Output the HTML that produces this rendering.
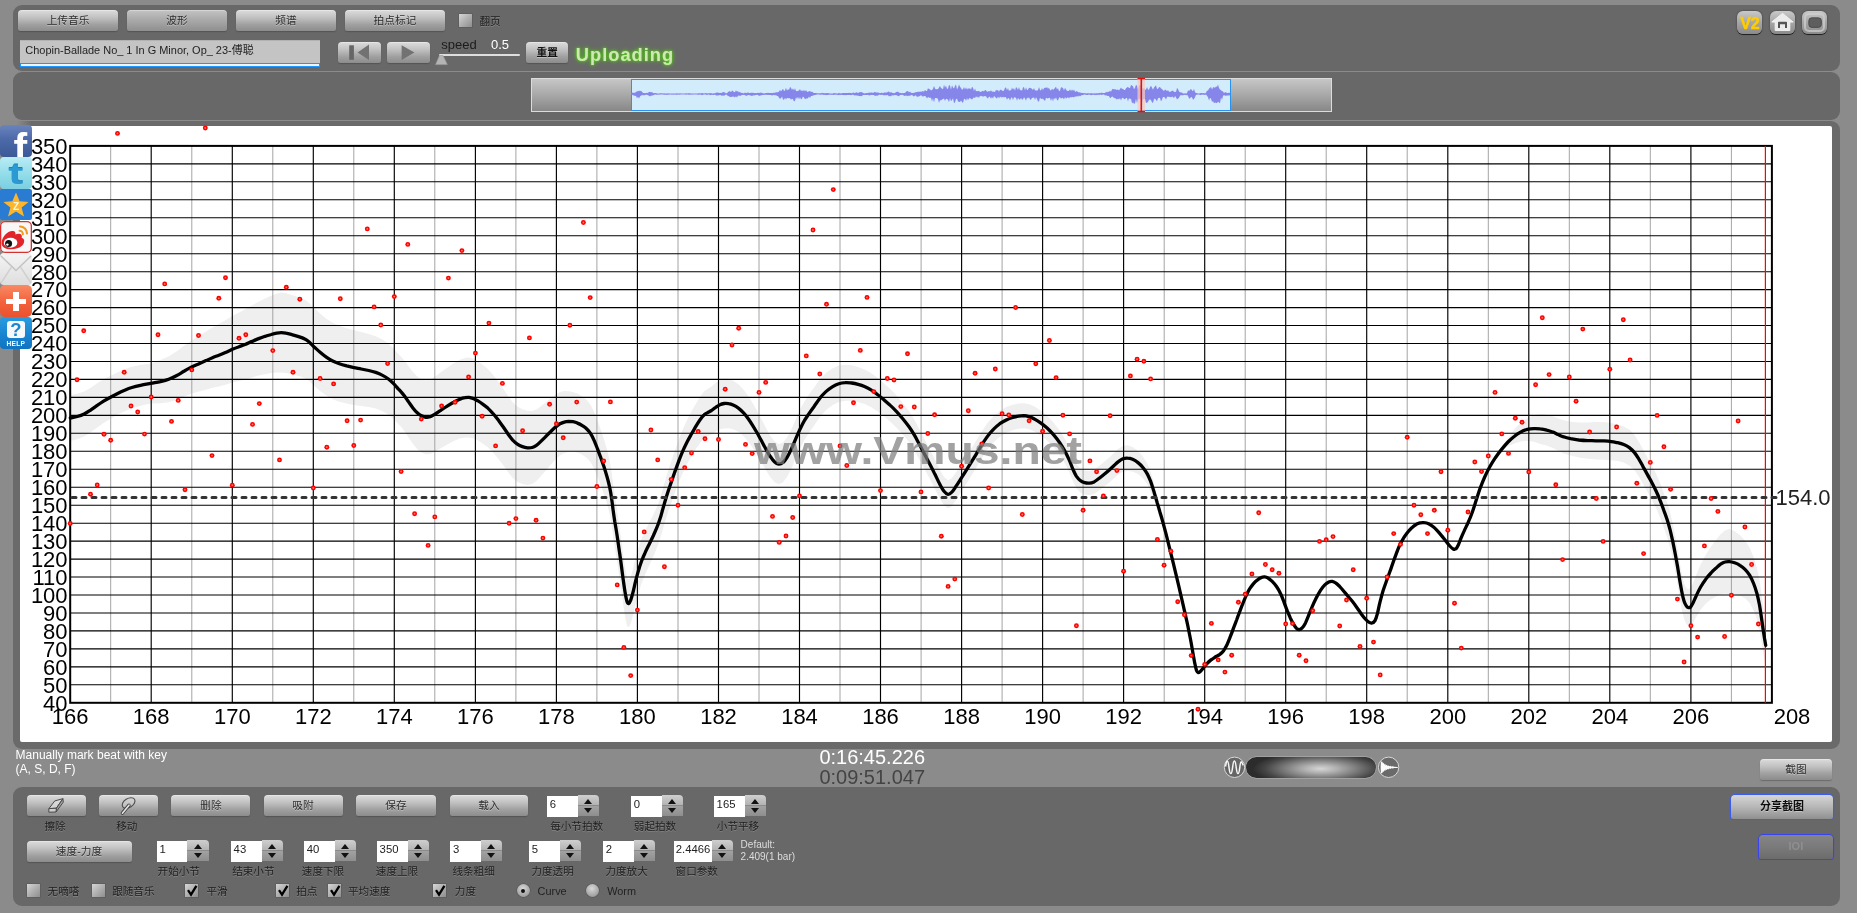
<!DOCTYPE html>
<html lang="zh"><head><meta charset="utf-8"><title>Vmus.net</title>
<style>
html,body{margin:0;padding:0}
body{width:1857px;height:913px;overflow:hidden;background:#8b8b8b;position:relative;font-family:"Liberation Sans","Noto Sans CJK SC",sans-serif;font-size:11px;color:#2a2a2a}
.abs{position:absolute}
.panel{position:absolute;background:#686868;border-radius:9px}
.btn{position:absolute;height:21px;line-height:21px;border-radius:4px 4px 2.5px 2.5px;text-align:center;font-size:10.7px;color:#2e2e2e;
 background:linear-gradient(#dcdcdc 0%,#c2c2c2 35%,#a0a0a0 70%,#8c8c8c 100%);box-shadow:0 1px 1px rgba(50,50,50,.35),inset 0 1px 0 rgba(255,255,255,.3);text-shadow:0 1px 0 rgba(255,255,255,.35)}
.btn.dk{background:linear-gradient(#c4c4c4 0%,#adadad 40%,#8f8f8f 100%)}
.lbl{position:absolute;font-size:10.6px;color:#1e1e1e;white-space:nowrap;line-height:12px;text-shadow:0 1px 0 rgba(255,255,255,.18)}
.cb{position:absolute;width:13px;height:13px;background:linear-gradient(135deg,#d6d6d6,#b0b0b0 50%,#8e8e8e);box-shadow:0 0 0 0.5px rgba(70,70,70,.6)}
.cb svg{position:absolute;left:1px;top:0}
.sp{position:absolute;height:21px}
.sp .in{position:absolute;left:0;top:0.5px;height:21px;background:#fff;font-size:11.3px;line-height:14px;color:#222;padding:1.2px 0 0 2.6px;box-sizing:border-box}
.sp .ar{position:absolute;top:-0.5px;width:21.5px;height:21px;border-radius:0 4px 0 0;background:linear-gradient(#cfcfcf,#b2b2b2 49%,#8a8a8a 50%,#a2a2a2 52%,#8e8e8e)}
.sp .ar:before,.sp .ar:after{content:"";position:absolute;left:6.5px;border:4px solid transparent}
.sp .ar:before{top:0.5px;border-bottom:5px solid #111;border-top-width:0;top:4px}
.sp .ar:after{top:13px;border-top:5px solid #111;border-bottom-width:0}
.soc{position:absolute;left:0;width:31.6px;height:31.4px;border-radius:4px;overflow:hidden}
.ti{position:absolute;top:11px;width:25px;height:23px;border-radius:6px;background:linear-gradient(#c9c9c9,#a6a6a6 50%,#8a8a8a);box-shadow:0 1px 0 #222,0 0 2px rgba(30,30,30,.6)}
#wrap{position:absolute;left:0;top:0;width:1857px;height:913px;will-change:transform}
</style></head><body><div id="wrap">

<!-- top control panel -->
<div class="panel" style="left:13px;top:5px;width:1827px;height:65.6px"></div>
<div class="btn" style="left:18.3px;top:10px;width:99.5px">上传音乐</div>
<div class="btn dk" style="left:127.3px;top:10px;width:99.5px">波形</div>
<div class="btn" style="left:236.3px;top:10px;width:99.5px">频谱</div>
<div class="btn" style="left:345px;top:10px;width:100px">拍点标记</div>
<div class="cb" style="left:458.5px;top:14px"></div>
<div class="lbl" style="left:479.5px;top:15px">翻页</div>

<div class="abs" style="left:20px;top:40px;width:299.6px;height:23.2px;background:#c4c4c4;box-shadow:inset 0 1px 0 #b2b2b2"></div>
<div class="abs" style="left:25.3px;top:43.5px;font-size:10.96px;line-height:13px;color:#1e1e1e;white-space:nowrap">Chopin-Ballade No_ 1 In G Minor, Op_ 23-傅聪</div>
<div class="abs" style="left:20px;top:63.2px;width:297.6px;height:1.4px;border:1.1px solid #1e96ff;background:#eaf5ff"></div>

<div class="btn" style="left:338px;top:41.8px;width:42.8px"><svg width="43" height="21" viewBox="0 0 43 21" style="position:absolute;left:0;top:0"><rect x="11.2" y="3.3" width="4.7" height="14.5" fill="#666"/><path d="M31 2.6L19.6 10.4L31 18.1Z" fill="#727272"/></svg></div>
<div class="btn" style="left:387.4px;top:41.8px;width:42.4px"><svg width="43" height="21" viewBox="0 0 43 21" style="position:absolute;left:0;top:0"><path d="M14.6 3.3L27.4 10.6L14.6 18.1Z" fill="#727272"/></svg></div>
<div class="abs" style="left:441.3px;top:37px;font-size:13px;line-height:15px;color:#1c1c1c">speed</div>
<div class="abs" style="left:491px;top:37px;font-size:13px;line-height:15px;color:#fff">0.5</div>
<div class="abs" style="left:438.6px;top:53.6px;width:81px;height:2.6px;background:#dedede;border-radius:1px"></div>
<svg class="abs" style="left:434px;top:54px" width="16" height="12" viewBox="0 0 16 12"><path d="M5.5 1.5L9 1.5L13.3 10.6L1.6 10.6Z" fill="#b4b4b4" stroke="#9c9c9c" stroke-width="0.6"/></svg>
<div class="btn" style="left:526px;top:41.8px;width:42.4px;font-weight:bold;color:#111">重置</div>
<div class="abs" style="left:575.8px;top:44px;font-size:18.3px;letter-spacing:1px;line-height:22px;font-weight:bold;color:#cfe9b4;text-shadow:0 0 3px #58c020,0 0 5px #58c020,0 0 2px #5ab828">Uploading</div>

<div class="ti" style="left:1737.3px"><div class="abs" style="left:0;top:1.6px;width:25px;text-align:center;font:bold 16px/21px 'Liberation Sans',sans-serif;color:#ffcc00;-webkit-text-stroke:0.5px #ffcc00;letter-spacing:-0.3px">V2</div></div>
<div class="ti" style="left:1769.8px"><svg width="25" height="23" viewBox="0 0 25 23" style="position:absolute;left:0;top:0"><path d="M12.5 2.4L23.2 11L19.8 11L19.8 19.4L5.2 19.4L5.2 11L1.8 11Z" fill="#ececec" stroke="#f4f4f4" stroke-width="1" stroke-linejoin="round"/><path d="M8 17V11.5Q8 10.8 8.8 10.8H16.2Q17 10.8 17 11.5V17H15V13.2H10V17Z" fill="#555"/></svg></div>
<div class="ti" style="left:1801.8px"><svg width="25" height="23" viewBox="0 0 25 23" style="position:absolute;left:0;top:0"><rect x="3" y="3" width="19" height="17" rx="4" fill="none" stroke="#d0d0d0" stroke-width="2" stroke-opacity=".7"/><rect x="6.8" y="6.8" width="12.6" height="9.6" rx="3" fill="#5e5e5e" stroke="#444" stroke-width="0.8"/></svg></div>

<!-- waveform panel -->
<div class="panel" style="left:13px;top:72.2px;width:1827px;height:47.8px"></div>
<div class="abs" style="left:531.3px;top:78.3px;width:800.5px;height:34px;box-sizing:border-box;border:1px solid #dcdcdc;background:linear-gradient(#c6c6c6,#a8a8a8 50%,#878787)"></div>
<div class="abs" style="left:630.8px;top:79.3px;width:600px;height:31.6px;box-sizing:border-box;border:1.2px solid #2a93f0;background:#d3ecfc"></div>
<svg class="abs" style="left:0;top:0" width="1857" height="125" viewBox="0 0 1857 125">
<polygon points="631,93.3 632,92.8 633,92.6 634,92.9 635,92.5 636,92.2 637,91.1 638,91.4 639,90.5 640,91.2 641,90.8 642,91.8 643,93 644,93 645,93.2 646,93.1 647,92.8 648,92.9 649,91.8 650,92.1 651,92.2 652,92 653,93.1 654,93.2 655,93.1 656,92.9 657,93.4 658,93.5 659,93.6 660,93.3 661,93.2 662,93.3 663,93.4 664,93.2 665,93.5 666,93.6 667,93.4 668,93.2 669,93.5 670,93.6 671,93.6 672,93.6 673,93.6 674,93.5 675,93.6 676,93.4 677,93.3 678,93.5 679,93.5 680,93.2 681,93.6 682,93.6 683,93.4 684,93.6 685,93.5 686,93.2 687,93.4 688,93.3 689,93.2 690,93.2 691,93.5 692,93.6 693,93.6 694,93.5 695,93.4 696,93.5 697,93.5 698,93.5 699,93.1 700,93.4 701,93.3 702,92.9 703,93.2 704,93.4 705,93.3 706,92.9 707,93.4 708,93.2 709,93.2 710,93.2 711,92.9 712,93.4 713,93.4 714,93.2 715,93.3 716,92.8 717,92.6 718,92.5 719,93 720,92.8 721,93 722,92.7 723,91.9 724,92.2 725,92.5 726,93.4 727,93.1 728,92.2 729,91.3 730,91.2 731,92.3 732,90.5 733,91 734,92.2 735,91.9 736,90.3 737,91.8 738,91.1 739,92.5 740,91.7 741,93.1 742,92.8 743,93.2 744,93.3 745,92.4 746,92.9 747,92.9 748,92.3 749,92.9 750,92.9 751,92.8 752,92.8 753,92.8 754,92.9 755,93.3 756,93 757,92.9 758,92.8 759,93 760,92.8 761,92.4 762,93.1 763,93.2 764,93.4 765,93.3 766,92.9 767,93.1 768,92.7 769,93 770,93.1 771,93.1 772,93.1 773,92.9 774,92.6 775,93 776,91.9 777,92.5 778,92.1 779,91.7 780,89.7 781,91.5 782,89.9 783,88.8 784,91.1 785,90.5 786,87.8 787,90.7 788,89.1 789,90 790,87.1 791,87.7 792,90.1 793,88.2 794,90.6 795,88.3 796,91.1 797,91.3 798,90.8 799,90.4 800,88.9 801,91.2 802,90 803,91.4 804,89.7 805,91.5 806,90.1 807,91.7 808,91.8 809,91.2 810,91.1 811,91.9 812,91.5 813,92.6 814,92.9 815,93 816,93 817,93.2 818,93.3 819,93.4 820,93 821,93.4 822,92.8 823,92.9 824,93.2 825,93.3 826,93.1 827,93.3 828,93 829,93.3 830,93.4 831,93.4 832,93.4 833,93.4 834,92.9 835,93.3 836,93.3 837,93.4 838,93.4 839,92.8 840,93.4 841,93.2 842,93.3 843,92.9 844,93 845,93.1 846,92.9 847,92.9 848,92.9 849,92.8 850,93 851,92.9 852,93.2 853,92.5 854,92.7 855,93.2 856,92.3 857,92.4 858,93 859,92.6 860,92.1 861,92.3 862,92.1 863,93 864,93.2 865,93.4 866,93.1 867,92.9 868,93 869,92.6 870,92.8 871,92.6 872,92.4 873,93 874,92.2 875,92.1 876,92.4 877,92.6 878,92.4 879,92.7 880,93.3 881,92.7 882,92.8 883,93.2 884,92.5 885,92.4 886,92.5 887,92.5 888,91.7 889,91.4 890,92.8 891,91.9 892,92.7 893,93.1 894,93.3 895,93.1 896,92 897,91.9 898,91.5 899,92.8 900,92.7 901,93.2 902,93.1 903,93.2 904,92.9 905,93 906,91.7 907,91.2 908,91 909,92.4 910,91.4 911,92.8 912,93 913,93 914,92.7 915,92.5 916,91.9 917,92.3 918,91.4 919,92.1 920,91.6 921,91.7 922,91.4 923,91 924,91.8 925,89.7 926,90.9 927,91.1 928,88.1 929,89.2 930,89.2 931,90.4 932,90 933,88.7 934,86.1 935,88.6 936,89.6 937,88.9 938,89.2 939,87.4 940,86 941,88.1 942,88.4 943,89.6 944,84.5 945,87.8 946,85.4 947,89 948,88.5 949,84.9 950,85.6 951,89.8 952,85.3 953,87.4 954,88.4 955,85.7 956,84.5 957,89.5 958,87.6 959,84.5 960,86.7 961,87.9 962,89.7 963,89.2 964,87.1 965,89.6 966,87.3 967,89.8 968,88.1 969,88.9 970,87.9 971,89.7 972,86.8 973,87.8 974,90.9 975,88.6 976,91.3 977,90.9 978,91.3 979,90.7 980,91.9 981,91.8 982,91.2 983,90.7 984,91.4 985,89.9 986,90.3 987,91.7 988,91.5 989,90.9 990,91.5 991,90.3 992,91.7 993,91.6 994,91.8 995,91.9 996,89.8 997,90.5 998,89.9 999,91.7 1000,89.7 1001,89.7 1002,90.4 1003,91 1004,90.6 1005,87.7 1006,87.6 1007,90.2 1008,88.1 1009,90.9 1010,90 1011,90.5 1012,87.4 1013,89.7 1014,88 1015,90.7 1016,87 1017,88.1 1018,89.9 1019,86.9 1020,90.2 1021,90.1 1022,90.8 1023,87.3 1024,87.2 1025,90.4 1026,87.2 1027,90 1028,89.8 1029,87.5 1030,88.2 1031,88 1032,89 1033,90.1 1034,88 1035,90.4 1036,90.2 1037,90.7 1038,89.9 1039,87.1 1040,90 1041,90.4 1042,87.9 1043,90 1044,88.3 1045,87.5 1046,88 1047,87.1 1048,88.7 1049,87.8 1050,90.1 1051,90.4 1052,88.8 1053,89.7 1054,89.3 1055,87.8 1056,86.8 1057,89.6 1058,87.9 1059,90.9 1060,90.8 1061,87.3 1062,87.6 1063,88 1064,90.6 1065,87.7 1066,89.4 1067,90.8 1068,91 1069,90.7 1070,89.3 1071,91.2 1072,89.3 1073,90.9 1074,89.5 1075,91.8 1076,91.4 1077,91.1 1078,92.3 1079,92.2 1080,92.6 1081,92.8 1082,93 1083,92.9 1084,93.3 1085,93 1086,93.4 1087,93.3 1088,93.3 1089,93.2 1090,93.4 1091,93.1 1092,93.4 1093,93.3 1094,93.4 1095,93.2 1096,93.4 1097,92.9 1098,93.4 1099,92.8 1100,93.2 1101,92.8 1102,92.8 1103,92.9 1104,93 1105,92.9 1106,91.8 1107,92.4 1108,91.6 1109,92.1 1110,90.4 1111,91.7 1112,89.5 1113,88.8 1114,89.5 1115,89.1 1116,89.8 1117,89.7 1118,89.5 1119,90.6 1120,89.1 1121,87.5 1122,89 1123,88.8 1124,90 1125,90 1126,88.3 1127,87.5 1128,86.8 1129,88 1130,88 1131,84.9 1132,85.5 1133,86.3 1134,89.2 1135,87.7 1136,84.7 1137,85.7 1138,89.5 1139,85.9 1140,84.8 1141,85.5 1142,87.7 1143,89.2 1144,87.8 1145,89.7 1146,89.5 1147,86.9 1148,89.5 1149,89.7 1150,87.3 1151,85.8 1152,87.7 1153,89.8 1154,87.5 1155,86.5 1156,85.2 1157,89.1 1158,88.7 1159,87.3 1160,87.1 1161,88.4 1162,88.9 1163,90.3 1164,91.1 1165,89.6 1166,90.1 1167,91.3 1168,90 1169,91.7 1170,91.7 1171,91.6 1172,90.7 1173,90.6 1174,91.9 1175,91.7 1176,92 1177,88.1 1178,88.9 1179,91.5 1180,92.3 1181,92.5 1182,92.4 1183,93.4 1184,93.4 1185,93.2 1186,93.4 1187,93.3 1188,90.3 1189,90.9 1190,90 1191,88.7 1192,90.6 1193,91.2 1194,88.8 1195,92.3 1196,93 1197,93 1198,93.4 1199,93.4 1200,93.3 1201,93 1202,93 1203,93.2 1204,93 1205,93.4 1206,92.8 1207,90.6 1208,90.8 1209,88.5 1210,88 1211,86.7 1212,89.6 1213,87.5 1214,87 1215,88 1216,86.3 1217,86.9 1218,84.6 1219,88.1 1220,89.5 1221,90.2 1222,91.1 1223,91.6 1224,92.9 1225,92.2 1226,92.3 1227,93.1 1228,93 1229,92.6 1230,93.3 1230,95.3 1229,95.5 1228,95.6 1227,95.4 1226,95.7 1225,95.7 1224,95.1 1223,96.1 1222,99.9 1221,97.6 1220,103.3 1219,102.5 1218,101.4 1217,103.3 1216,102.8 1215,102.4 1214,103.2 1213,100.9 1212,102.1 1211,98.4 1210,98.1 1209,100.6 1208,97.2 1207,95.7 1206,94.6 1205,94.9 1204,94.8 1203,94.8 1202,94.6 1201,95.1 1200,95 1199,94.6 1198,94.6 1197,94.8 1196,94.8 1195,97.3 1194,98.9 1193,99.7 1192,97.3 1191,97 1190,98.5 1189,98.4 1188,95.8 1187,95 1186,95.2 1185,94.7 1184,94.9 1183,95.2 1182,95.3 1181,95.3 1180,95.4 1179,98.1 1178,98.5 1177,99.4 1176,97.2 1175,96.1 1174,98.3 1173,96.9 1172,96.4 1171,97.4 1170,96.8 1169,96.9 1168,96.4 1167,96.9 1166,99.5 1165,97.7 1164,97.1 1163,97.1 1162,99.4 1161,101.6 1160,98.1 1159,97.7 1158,98.2 1157,101.2 1156,100.1 1155,98.6 1154,99.2 1153,103 1152,102.3 1151,100.2 1150,99.2 1149,100.1 1148,101.8 1147,102.7 1146,103.1 1145,98.7 1144,99.3 1143,99.1 1142,103.3 1141,98.7 1140,99.2 1139,98.8 1138,99.6 1137,103.4 1136,98.8 1135,103.6 1134,103.7 1133,102.3 1132,103.6 1131,98.4 1130,99.3 1129,98.1 1128,101.5 1127,98.1 1126,97.9 1125,99.3 1124,99.1 1123,97.8 1122,98 1121,100.6 1120,97.9 1119,99.4 1118,98.5 1117,99.4 1116,98.9 1115,97.7 1114,98.3 1113,96.8 1112,96.5 1111,97.4 1110,98.3 1109,96.1 1108,96.1 1107,95.8 1106,95.2 1105,95.6 1104,94.6 1103,94.6 1102,94.9 1101,94.7 1100,94.6 1099,95.2 1098,94.6 1097,95.2 1096,94.8 1095,95.2 1094,94.7 1093,94.8 1092,94.9 1091,95.2 1090,94.8 1089,94.6 1088,95.1 1087,95.1 1086,95.1 1085,94.6 1084,94.6 1083,95.2 1082,95 1081,95.5 1080,96.6 1079,95.6 1078,96.7 1077,95.8 1076,97 1075,96.2 1074,97.6 1073,96.9 1072,97 1071,97.4 1070,97.1 1069,98.5 1068,97.2 1067,97.7 1066,98.7 1065,97 1064,99.5 1063,98.1 1062,97.8 1061,98.7 1060,97.3 1059,97.7 1058,100.5 1057,100.1 1056,97.3 1055,99.4 1054,97.7 1053,101.4 1052,98.1 1051,100.9 1050,97.9 1049,97.8 1048,98.5 1047,98.2 1046,97.7 1045,101.1 1044,100 1043,98.7 1042,98.8 1041,99 1040,97.5 1039,101.5 1038,101.4 1037,99 1036,97.3 1035,99.9 1034,97.3 1033,98 1032,97.8 1031,99.7 1030,99.5 1029,97.3 1028,98.4 1027,97.6 1026,100.8 1025,98.4 1024,97.2 1023,99.2 1022,99.8 1021,97.8 1020,99.7 1019,99.2 1018,97.8 1017,100.8 1016,97.8 1015,97.4 1014,97.3 1013,100.2 1012,97.2 1011,98 1010,100.6 1009,98.3 1008,98.1 1007,99.8 1006,97.3 1005,97 1004,97.6 1003,96.8 1002,97.4 1001,97.3 1000,96.4 999,98.6 998,96.4 997,98.4 996,98.1 995,96.7 994,96.1 993,98.7 992,96.8 991,98.7 990,97 989,96.4 988,98.5 987,97.7 986,96.2 985,96.3 984,96 983,97.1 982,95.8 981,96.3 980,95.8 979,98.1 978,96.4 977,97.6 976,96.2 975,98.3 974,97.2 973,98.3 972,99.5 971,99 970,97.9 969,98.4 968,100.2 967,98.1 966,101.1 965,98.8 964,99.1 963,103 962,102.1 961,100.6 960,102.1 959,101.8 958,101.5 957,98.7 956,99 955,102.6 954,103 953,98.2 952,99.9 951,101.3 950,98.1 949,102.3 948,99.8 947,98.9 946,98.8 945,101 944,98.5 943,99.1 942,99.4 941,100.5 940,99.9 939,102.9 938,98.9 937,98.2 936,98.1 935,98.1 934,102.6 933,98.2 932,101.5 931,97.6 930,98.1 929,97.5 928,97.1 927,98.4 926,96.8 925,96.1 924,95.9 923,96.7 922,96 921,95.3 920,95.7 919,96.5 918,96.4 917,97 916,95.6 915,95.5 914,96.4 913,95.9 912,94.8 911,95.3 910,95.8 909,95.7 908,95.7 907,96.3 906,95.2 905,95.9 904,95.8 903,95 902,94.8 901,95.1 900,94.9 899,96.2 898,96.1 897,95.6 896,95 895,95.2 894,95 893,95.7 892,95.1 891,96.4 890,95.7 889,96.5 888,95.2 887,95.1 886,95.4 885,95.1 884,95.5 883,95 882,94.8 881,94.9 880,94.8 879,94.8 878,95.4 877,95.7 876,95.4 875,96.3 874,95.1 873,95.1 872,95 871,94.9 870,95.2 869,95.4 868,94.7 867,95.1 866,95 865,95.1 864,94.9 863,94.9 862,95.9 861,96.2 860,96 859,95.9 858,95.4 857,95.7 856,95.3 855,95.5 854,95.2 853,94.7 852,94.8 851,95.2 850,94.9 849,95.1 848,95 847,95.1 846,95.3 845,95.1 844,95.3 843,95.1 842,94.9 841,94.8 840,95.2 839,94.8 838,95.2 837,94.8 836,94.8 835,94.6 834,94.9 833,95.1 832,94.6 831,95 830,94.6 829,94.7 828,94.9 827,95.1 826,95.2 825,94.8 824,95.1 823,94.7 822,94.6 821,94.8 820,94.8 819,94.6 818,94.6 817,94.6 816,94.7 815,95 814,95.2 813,95.5 812,95.9 811,95.9 810,98 809,96.5 808,98.3 807,98.5 806,98.5 805,99.3 804,97.4 803,96.6 802,98.5 801,99.5 800,97.1 799,99.6 798,96.8 797,99.1 796,97.2 795,100.7 794,101.4 793,99.2 792,98.8 791,99.7 790,97.9 789,98.4 788,98.1 787,98.1 786,99.4 785,97.8 784,99.7 783,99.6 782,96.6 781,98.2 780,98.7 779,97.7 778,96.1 777,96 776,95.1 775,95.4 774,94.8 773,95.3 772,95.4 771,94.9 770,95.1 769,94.9 768,94.8 767,95.1 766,94.8 765,94.7 764,94.9 763,95 762,95.1 761,95.4 760,95.6 759,95.9 758,95 757,94.8 756,95 755,95.2 754,95.5 753,95.3 752,96.3 751,95.4 750,95.6 749,95.1 748,95 747,95.7 746,95.7 745,95.2 744,94.7 743,94.9 742,94.9 741,95.6 740,96.1 739,95.5 738,95.8 737,97.6 736,96.2 735,97.2 734,97.1 733,96.3 732,97.1 731,96.8 730,97.2 729,96 728,96.3 727,94.9 726,94.6 725,94.9 724,95.9 723,95.3 722,95.9 721,95.2 720,94.9 719,95.3 718,95.4 717,95.4 716,95.4 715,94.6 714,95 713,95 712,94.7 711,95 710,95.2 709,94.6 708,94.6 707,95.2 706,94.6 705,94.6 704,94.6 703,94.8 702,95.2 701,94.6 700,94.7 699,94.6 698,95.1 697,94.6 696,94.5 695,94.5 694,94.5 693,94.4 692,94.7 691,94.5 690,94.7 689,94.7 688,94.4 687,94.6 686,94.7 685,94.6 684,94.5 683,94.5 682,94.6 681,94.4 680,94.4 679,94.8 678,94.5 677,94.8 676,94.8 675,94.5 674,94.8 673,94.4 672,94.7 671,94.4 670,94.5 669,94.7 668,94.5 667,94.9 666,94.7 665,94.7 664,94.8 663,94.5 662,94.6 661,94.5 660,94.6 659,94.7 658,94.6 657,94.9 656,94.5 655,94.6 654,95.1 653,95.2 652,95.8 651,95.6 650,96.4 649,95.8 648,95.2 647,94.8 646,94.7 645,95.1 644,95.6 643,95 642,95.3 641,95.5 640,96.4 639,98.6 638,96.8 637,98.2 636,95.8 635,96 634,95.6 633,95.2 632,94.8 631,94.6" fill="#8585ea"/>
<rect x="1137.5" y="79" width="7.5" height="32" fill="#f7c9c0" fill-opacity="0.75"/>
<path d="M1137.5 78.5h7.5M1137.5 111.5h7.5M1141.3 78.5v33" stroke="#e01010" stroke-width="1.6" fill="none"/>
</svg>

<!-- chart panel -->
<div class="abs" style="left:13.2px;top:121.3px;width:1826.5px;height:627.3px;background:#6a6a6a;border-radius:9px"></div>
<div class="abs" style="left:19.9px;top:125.6px;width:1812.3px;height:616.6px;background:#fff;border-radius:2px"></div>
<svg class="abs" style="left:0;top:0" width="1857" height="913" viewBox="0 0 1857 913" font-family="Liberation Sans, sans-serif">
<polygon points="70.3,395 77.3,393.8 84.2,391.5 90.3,388 96.5,383.8 103.2,379.6 110.5,375.7 117.7,372.2 124.7,369.2 131.9,366.8 140.5,364.9 150.7,363.4 160.4,360.1 168.7,356.4 176.8,351.3 184.4,345.5 191.7,340.2 199.1,335.7 206,331.6 212.5,327.6 218.9,324.1 225.4,320.3 232.3,316 239.1,312.5 245.7,309.1 252.2,305.3 258.6,301.7 265.1,298.5 271.2,295.8 276.6,293.7 281.2,292.6 286,293.2 291.9,294.9 298.6,297.2 304.8,299.8 309.4,303.2 313.9,307.8 319.8,313.3 326.3,318.7 332.7,322.8 339.4,325.7 346.7,328.2 353.9,330.3 361.2,332 368.7,334 375.7,336.2 382.1,339.2 388.4,343.4 394.1,348.9 398.2,353.7 400.9,356.5 404.3,360.4 408.6,366.3 412.9,372 417.2,376.4 421.5,379.3 425.8,380.4 430.1,379.6 434.9,376.7 440.8,372.3 447.2,367.7 453.7,363.3 459.9,359.8 465,357.9 469,357.4 473,358.6 477.6,361.1 482.7,364.8 487.8,369.1 492.6,374.2 497.7,380.8 503.1,388.5 508.2,396.1 512.7,402.2 517.3,406.5 522.4,409.3 527.5,410.7 532.1,411 536.4,409.6 540.6,406.6 545.2,402.8 550.3,398.6 555.4,394.6 560,392.1 564.3,391.1 568.6,391.2 572.9,391.9 577.4,393.6 582.3,396.4 586.8,400.1 590.8,405.2 594.3,412.4 597.6,421 600.8,429.8 604,439.4 607.1,450.1 609.8,461.2 611.7,472.9 613.2,484.7 614.8,495.9 616.9,508.6 619,523.4 621.2,539.2 623.3,555.7 625.4,569.6 627.1,577.7 628.8,579.5 630.8,576.3 633.1,568.5 635.6,558.1 638.5,547.7 641.6,538.7 645.1,530.8 649.1,523 653.4,514.7 657.2,506.3 660,498.8 662.3,490.6 665.2,480.4 668.4,469.8 671.6,460.2 675.1,450 679.1,438.7 683.4,427.9 687.7,418.7 692,410.6 696.3,402.9 700.4,396.2 704,391.6 707.5,389 711.5,386.5 715.7,383.1 719.9,380.1 724.2,378.6 728.5,379 733.1,380.8 738.4,384.3 743.8,389.9 748.6,396.4 752.9,403.4 757.2,411 761.5,419.2 765.8,427.6 770.1,435.4 774.4,441.3 778.7,444.1 782.9,442.7 787.2,437.3 791.5,429 795.8,419.2 800.1,409.6 804.4,401.5 809,394.6 814.1,387.5 819.7,379.6 825.9,373 832.3,368.4 838.8,365.6 845.2,364.7 851.7,365.3 858.1,366.9 864.5,369.4 871,372.9 877.4,377.7 883.9,383.2 890.3,389 896.8,395.7 903.2,403.4 909.4,411.6 914.7,420.2 919.6,429.7 924.7,439.5 930,449.7 935.1,460.1 939.7,469.7 944,477 948,480.3 951.8,478.3 956.1,472.3 961.4,464.1 967.6,454.6 974.1,444.2 980.5,433.6 986.9,423.8 993.4,416.2 999.8,410.8 1006.3,407.1 1012.7,404.8 1018.6,403.5 1023.7,403.2 1028.8,404.1 1034.4,406.5 1040.6,410.5 1047.1,415.7 1053.5,422.4 1059.7,430.5 1065,439.1 1069.3,448 1072.8,456.9 1076.3,464 1080.3,468.4 1084.6,470.6 1089.4,471.1 1094,469.8 1098.5,466.6 1103.6,462.3 1109,457.7 1114.1,452.9 1118.7,448.6 1122.9,446 1127.5,445.2 1132.6,447.1 1138,451 1143.1,456.8 1147.4,463.8 1150.9,472.4 1154.1,483.4 1157.1,494.8 1159.9,505.2 1162.8,516 1166.1,529.5 1169.7,545.2 1173.4,561.5 1177,577.7 1177,579.7 1173.4,565.9 1169.7,552.1 1166.1,538.8 1162.8,527.5 1159.9,518.5 1157.1,510 1154.1,500.7 1150.9,491.9 1147.4,484.4 1143.1,478.6 1138,474.1 1132.6,471.6 1127.5,471.1 1122.9,471.7 1118.7,474.1 1114.1,478.2 1109,482.7 1103.6,487.1 1098.5,491 1094,494 1089.4,495.1 1084.6,494.7 1080.3,492.6 1076.3,488.2 1072.8,481.1 1069.3,472.3 1065,463.5 1059.7,454.9 1053.5,446.9 1047.1,440.4 1040.6,435.3 1034.4,431.4 1028.8,429.1 1023.7,428.2 1018.6,428.7 1012.7,430.2 1006.3,432.8 999.8,436.7 993.4,442.4 986.9,450.3 980.5,460.3 974.1,471.2 967.6,481.8 961.4,491.6 956.1,500 951.8,506.2 948,508.3 944,505.3 939.7,498.4 935.1,489.2 930,479.2 924.7,469.5 919.6,460 914.7,451 909.4,442.8 903.2,435.1 896.8,427.9 890.3,421.7 883.9,416.3 877.4,411.3 871,407 864.5,403.9 858.1,402 851.7,400.8 845.2,400.7 838.8,402 832.3,405.2 825.9,410.2 819.7,417.2 814.1,425.4 809,432.8 804.4,439.9 800.1,448.4 795.8,458.2 791.5,468.2 787.2,476.8 782.9,482.5 778.7,484.2 774.4,482.1 770.1,477 765.8,470.1 761.5,462.4 757.2,455 752.9,448.2 748.6,442 743.8,436.4 738.4,431.8 733.1,429.3 728.5,428.3 724.2,428.4 719.9,429.3 715.7,431.6 711.5,434.4 707.5,436.3 704,438.4 700.4,442.4 696.3,448.5 692,455.5 687.7,462.9 683.4,471.5 679.1,481.6 675.1,492.3 671.6,502 668.4,511.1 665.2,521.2 662.3,531 660,538.8 657.2,547 653.4,556.3 649.1,565.7 645.1,574.5 641.6,583.3 638.5,593.1 635.6,604.2 633.1,615.2 630.8,623.6 628.8,627.3 627.1,625.9 625.4,618.4 623.3,605 621.2,589.2 619,573.9 616.9,559.7 614.8,547.6 613.2,536.9 611.7,525.5 609.8,514.4 607.1,504 604,494.3 600.8,485.6 597.6,477.3 594.3,469.2 590.8,462.4 586.8,457.9 582.3,454.8 577.4,452.6 572.9,451.5 568.6,451.7 564.3,453.1 560,455.5 555.4,459.6 550.3,465.3 545.2,471.3 540.6,476.6 536.4,481.1 532.1,484 527.5,484.9 522.4,483.9 517.3,481.7 512.7,477.9 508.2,472.2 503.1,465 497.7,457.9 492.6,451.9 487.8,447.2 482.7,443.4 477.6,440.3 473,438.2 469,437.4 465,437.4 459.9,438.5 453.7,441.1 447.2,444.5 440.8,448.2 434.9,451.8 430.1,454 425.8,454.2 421.5,452.4 417.2,448.9 412.9,443.8 408.6,437.5 404.3,431 400.9,426.6 398.2,423.9 394.1,419.5 388.4,414.6 382.1,411 375.7,408.6 368.7,407.1 361.2,405.9 353.9,404.9 346.7,403.5 339.4,401.7 332.7,399.3 326.3,395.6 319.8,390.7 313.9,385.6 309.4,381.2 304.8,378.2 298.6,376 291.9,374.2 286,372.9 281.2,372.6 276.6,372.5 271.2,373.1 265.1,374.2 258.6,375.5 252.2,377.4 245.7,379.5 239.1,381 232.3,382.6 225.4,384.8 218.9,386.4 212.5,387.8 206,389.7 199.1,391.6 191.7,393.6 184.4,396.5 176.8,399.8 168.7,402.3 160.4,403.2 150.7,403.4 140.5,405.7 131.9,408.2 124.7,411.2 117.7,414.6 110.5,418.7 103.2,423.2 96.5,427.9 90.3,432.5 84.2,436.5 77.3,439.3 70.3,441" fill="#efefef"/><polygon points="1501.6,448.6 1508,438 1514.5,429 1520.9,422.5 1527.4,418.1 1533.8,415.4 1540.2,413.9 1546.7,414.6 1552.9,416.3 1558.2,418.4 1563.6,420.3 1570.6,421.7 1578.9,422.4 1587.5,422.5 1596.1,422.1 1604.1,422 1611.1,422.9 1617.6,424.4 1623.7,426.4 1629.4,429.8 1634.5,435 1639,441.9 1643.3,449.8 1647.6,457.8 1651.9,465.6 1656.2,474.1 1660.4,483.8 1664,493.4 1667.1,502.2 1670.1,512.3 1672.9,524.6 1675.4,537.2 1677.7,549.7 1679.8,562.8 1682,574.8 1684.1,583.4 1686.3,588 1688.4,589.5 1690.6,588.1 1693,583.3 1696.2,574.9 1700.5,564.7 1705.6,554.9 1711,546.6 1716.1,539.8 1720.6,534.3 1724.9,530.5 1729.5,528.7 1734.6,531.2 1739.9,535.1 1745,540.5 1749.6,547.5 1753.6,556.9 1757,568 1759.5,579.9 1761.4,593.3 1763.1,606.1 1764.5,616.1 1765.7,623.9 1765.7,666.7 1764.5,660.5 1763.1,652.2 1761.4,641.5 1759.5,630.2 1757,619.5 1753.6,610.2 1749.6,602.9 1745,598.2 1739.9,595.5 1734.6,594.3 1729.5,594.5 1724.9,593.5 1720.6,594.2 1716.1,596.4 1711,599.4 1705.6,603.8 1700.5,609.9 1696.2,616.9 1693,623 1690.6,625.9 1688.4,625.8 1686.3,623.9 1684.1,619.2 1682,610.5 1679.8,598.4 1677.7,585.2 1675.4,572.5 1672.9,559.8 1670.1,547.4 1667.1,537.1 1664,528.2 1660.4,518.3 1656.2,508.4 1651.9,499.7 1647.6,492 1643.3,484.4 1639,476.8 1634.5,470.3 1629.4,465.5 1623.7,462.6 1617.6,461.1 1611.1,460.2 1604.1,459.8 1596.1,459.4 1587.5,458.7 1578.9,457.5 1570.6,455.6 1563.6,453.4 1558.2,450.8 1552.9,447.9 1546.7,445.5 1540.2,443.9 1533.8,441.8 1527.4,440.7 1520.9,441.4 1514.5,443.4 1508,446.1 1501.6,450.2" fill="#efefef"/>
<g stroke="#9a9a9a" stroke-width="0.9"><line x1="110.7" y1="145.9" x2="110.7" y2="702.8"/><line x1="191.8" y1="145.9" x2="191.8" y2="702.8"/><line x1="272.8" y1="145.9" x2="272.8" y2="702.8"/><line x1="353.8" y1="145.9" x2="353.8" y2="702.8"/><line x1="434.8" y1="145.9" x2="434.8" y2="702.8"/><line x1="515.9" y1="145.9" x2="515.9" y2="702.8"/><line x1="596.9" y1="145.9" x2="596.9" y2="702.8"/><line x1="678" y1="145.9" x2="678" y2="702.8"/><line x1="759" y1="145.9" x2="759" y2="702.8"/><line x1="840" y1="145.9" x2="840" y2="702.8"/><line x1="921.1" y1="145.9" x2="921.1" y2="702.8"/><line x1="1002.1" y1="145.9" x2="1002.1" y2="702.8"/><line x1="1083.1" y1="145.9" x2="1083.1" y2="702.8"/><line x1="1164.2" y1="145.9" x2="1164.2" y2="702.8"/><line x1="1245.2" y1="145.9" x2="1245.2" y2="702.8"/><line x1="1326.2" y1="145.9" x2="1326.2" y2="702.8"/><line x1="1407.2" y1="145.9" x2="1407.2" y2="702.8"/><line x1="1488.3" y1="145.9" x2="1488.3" y2="702.8"/><line x1="1569.3" y1="145.9" x2="1569.3" y2="702.8"/><line x1="1650.3" y1="145.9" x2="1650.3" y2="702.8"/><line x1="1731.4" y1="145.9" x2="1731.4" y2="702.8"/></g><g stroke="#000" stroke-width="1.15"><line x1="151.2" y1="145.9" x2="151.2" y2="702.8"/><line x1="232.3" y1="145.9" x2="232.3" y2="702.8"/><line x1="313.3" y1="145.9" x2="313.3" y2="702.8"/><line x1="394.3" y1="145.9" x2="394.3" y2="702.8"/><line x1="475.4" y1="145.9" x2="475.4" y2="702.8"/><line x1="556.4" y1="145.9" x2="556.4" y2="702.8"/><line x1="637.4" y1="145.9" x2="637.4" y2="702.8"/><line x1="718.5" y1="145.9" x2="718.5" y2="702.8"/><line x1="799.5" y1="145.9" x2="799.5" y2="702.8"/><line x1="880.5" y1="145.9" x2="880.5" y2="702.8"/><line x1="961.6" y1="145.9" x2="961.6" y2="702.8"/><line x1="1042.6" y1="145.9" x2="1042.6" y2="702.8"/><line x1="1123.6" y1="145.9" x2="1123.6" y2="702.8"/><line x1="1204.7" y1="145.9" x2="1204.7" y2="702.8"/><line x1="1285.7" y1="145.9" x2="1285.7" y2="702.8"/><line x1="1366.7" y1="145.9" x2="1366.7" y2="702.8"/><line x1="1447.8" y1="145.9" x2="1447.8" y2="702.8"/><line x1="1528.8" y1="145.9" x2="1528.8" y2="702.8"/><line x1="1609.8" y1="145.9" x2="1609.8" y2="702.8"/><line x1="1690.9" y1="145.9" x2="1690.9" y2="702.8"/></g>
<g stroke="#000" stroke-width="1.1"><line x1="70.2" y1="684.8" x2="1771.9" y2="684.8"/><line x1="70.2" y1="666.9" x2="1771.9" y2="666.9"/><line x1="70.2" y1="648.9" x2="1771.9" y2="648.9"/><line x1="70.2" y1="630.9" x2="1771.9" y2="630.9"/><line x1="70.2" y1="613" x2="1771.9" y2="613"/><line x1="70.2" y1="595" x2="1771.9" y2="595"/><line x1="70.2" y1="577" x2="1771.9" y2="577"/><line x1="70.2" y1="559.1" x2="1771.9" y2="559.1"/><line x1="70.2" y1="541.1" x2="1771.9" y2="541.1"/><line x1="70.2" y1="523.2" x2="1771.9" y2="523.2"/><line x1="70.2" y1="505.2" x2="1771.9" y2="505.2"/><line x1="70.2" y1="487.2" x2="1771.9" y2="487.2"/><line x1="70.2" y1="469.3" x2="1771.9" y2="469.3"/><line x1="70.2" y1="451.3" x2="1771.9" y2="451.3"/><line x1="70.2" y1="433.3" x2="1771.9" y2="433.3"/><line x1="70.2" y1="415.4" x2="1771.9" y2="415.4"/><line x1="70.2" y1="397.4" x2="1771.9" y2="397.4"/><line x1="70.2" y1="379.4" x2="1771.9" y2="379.4"/><line x1="70.2" y1="361.5" x2="1771.9" y2="361.5"/><line x1="70.2" y1="343.5" x2="1771.9" y2="343.5"/><line x1="70.2" y1="325.5" x2="1771.9" y2="325.5"/><line x1="70.2" y1="307.6" x2="1771.9" y2="307.6"/><line x1="70.2" y1="289.6" x2="1771.9" y2="289.6"/><line x1="70.2" y1="271.7" x2="1771.9" y2="271.7"/><line x1="70.2" y1="253.7" x2="1771.9" y2="253.7"/><line x1="70.2" y1="235.7" x2="1771.9" y2="235.7"/><line x1="70.2" y1="217.8" x2="1771.9" y2="217.8"/><line x1="70.2" y1="199.8" x2="1771.9" y2="199.8"/><line x1="70.2" y1="181.8" x2="1771.9" y2="181.8"/><line x1="70.2" y1="163.9" x2="1771.9" y2="163.9"/></g>
<rect x="70.2" y="145.9" width="1701.7" height="556.9" fill="none" stroke="#000" stroke-width="2"/>
<line x1="1765.4" y1="145.9" x2="1765.4" y2="702.8" stroke="#f00" stroke-width="1.2"/>
<path d="M70.3 418C71.5 417.8 75 417.2 77.3 416.5C79.6 415.9 82 415.1 84.2 414C86.3 413 88.3 411.6 90.3 410.3C92.4 408.9 94.4 407.3 96.5 405.9C98.7 404.4 100.9 402.9 103.2 401.4C105.5 400 108 398.5 110.5 397.2C112.9 395.8 115.3 394.6 117.7 393.4C120.1 392.2 122.3 391.2 124.7 390.2C127.1 389.2 129.3 388.3 131.9 387.5C134.6 386.7 137.4 386 140.5 385.3C143.7 384.6 147.4 384 150.7 383.4C154 382.8 157.4 382.3 160.4 381.7C163.4 381 166 380.4 168.7 379.3C171.4 378.3 174.1 376.9 176.8 375.5C179.4 374.1 181.9 372.4 184.4 371C186.9 369.5 189.3 368.2 191.7 366.9C194.2 365.7 196.8 364.7 199.1 363.7C201.5 362.6 203.8 361.6 206 360.6C208.2 359.6 210.3 358.6 212.5 357.7C214.6 356.8 216.7 356.1 218.9 355.2C221.1 354.4 223.2 353.5 225.4 352.5C227.7 351.5 230 350.3 232.3 349.3C234.5 348.4 236.9 347.5 239.1 346.7C241.4 345.9 243.6 345.2 245.7 344.3C247.9 343.4 250 342.3 252.2 341.4C254.3 340.4 256.5 339.4 258.6 338.6C260.8 337.8 263 337 265.1 336.3C267.2 335.7 269.3 335 271.2 334.5C273.2 333.9 275 333.4 276.6 333.1C278.3 332.8 279.6 332.6 281.2 332.6C282.7 332.6 284.2 332.7 286 333.1C287.8 333.4 289.8 334 291.9 334.6C294 335.2 296.5 335.9 298.6 336.6C300.8 337.3 303 338 304.8 339C306.6 339.9 307.8 340.9 309.4 342.2C310.9 343.5 312.2 345.1 313.9 346.7C315.7 348.3 317.8 350.3 319.8 352C321.9 353.8 324.1 355.6 326.3 357.1C328.4 358.6 330.5 359.9 332.7 361C334.9 362.1 337.1 362.9 339.4 363.7C341.7 364.5 344.2 365.2 346.7 365.9C349.1 366.5 351.5 367.1 353.9 367.6C356.3 368.1 358.7 368.5 361.2 369C363.6 369.5 366.3 370 368.7 370.5C371.1 371.1 373.4 371.7 375.7 372.4C377.9 373.2 380 374 382.1 375.1C384.2 376.2 386.4 377.5 388.4 379C390.4 380.5 392.5 382.6 394.1 384.2C395.8 385.9 397.1 387.6 398.2 388.8C399.3 390 399.9 390.4 400.9 391.6C401.9 392.7 403 394 404.3 395.7C405.6 397.4 407.2 399.9 408.6 401.9C410 403.9 411.5 406.1 412.9 407.9C414.3 409.7 415.7 411.4 417.2 412.7C418.6 414 420 415.1 421.5 415.8C422.9 416.6 424.3 417.1 425.8 417.3C427.2 417.5 428.5 417.3 430.1 416.8C431.6 416.3 433.1 415.3 434.9 414.2C436.7 413.1 438.7 411.6 440.8 410.3C442.9 408.9 445.1 407.4 447.2 406.1C449.4 404.7 451.6 403.3 453.7 402.2C455.8 401 458 399.9 459.9 399.2C461.7 398.4 463.4 397.9 465 397.7C466.5 397.4 467.6 397.3 469 397.4C470.3 397.6 471.6 397.9 473 398.4C474.4 398.9 476 399.8 477.6 400.7C479.2 401.7 481 402.9 482.7 404.1C484.4 405.3 486.1 406.6 487.8 408.1C489.4 409.6 490.9 411.2 492.6 413.1C494.3 414.9 496 417.1 497.7 419.3C499.4 421.6 501.3 424.3 503.1 426.7C504.8 429.2 506.6 431.9 508.2 434.2C509.8 436.4 511.2 438.4 512.7 440.1C514.3 441.7 515.7 443 517.3 444.1C518.9 445.2 520.7 446 522.4 446.6C524.1 447.2 525.9 447.6 527.5 447.8C529.1 447.9 530.6 447.9 532.1 447.5C533.5 447.1 534.9 446.4 536.4 445.4C537.8 444.4 539.2 443 540.6 441.6C542.1 440.2 543.6 438.7 545.2 437.1C546.8 435.4 548.6 433.6 550.3 432C552 430.3 553.8 428.5 555.4 427.1C557 425.8 558.5 424.6 560 423.8C561.5 423 562.8 422.5 564.3 422.1C565.7 421.7 567.1 421.5 568.6 421.4C570 421.4 571.4 421.4 572.9 421.7C574.3 422 575.9 422.4 577.4 423.1C579 423.7 580.7 424.6 582.3 425.6C583.8 426.6 585.4 427.6 586.8 429C588.2 430.4 589.6 431.9 590.8 433.8C592.1 435.8 593.2 438.3 594.3 440.8C595.4 443.4 596.5 446.3 597.6 449.1C598.6 452 599.7 454.8 600.8 457.7C601.8 460.7 602.9 463.6 604 466.8C605 470.1 606.1 473.6 607.1 477C608.1 480.5 609 484.1 609.8 487.8C610.6 491.5 611.2 495.4 611.7 499.2C612.3 503 612.7 507 613.2 510.8C613.7 514.5 614.2 517.9 614.8 521.8C615.5 525.7 616.2 529.7 616.9 534.2C617.6 538.6 618.3 543.6 619 548.7C619.7 553.7 620.5 558.9 621.2 564.2C621.9 569.5 622.6 575.4 623.3 580.3C624 585.3 624.7 590.4 625.4 594C626 597.6 626.5 600.2 627.1 601.8C627.7 603.4 628.2 603.7 628.8 603.4C629.5 603.1 630.1 601.8 630.8 599.9C631.5 598 632.3 595 633.1 591.9C633.9 588.7 634.7 584.7 635.6 581.1C636.5 577.6 637.5 573.7 638.5 570.4C639.5 567 640.5 564 641.6 561C642.7 558 643.8 555.5 645.1 552.7C646.3 549.9 647.7 547.2 649.1 544.4C650.5 541.5 652 538.5 653.4 535.5C654.7 532.5 656.1 529.4 657.2 526.6C658.4 523.9 659.2 521.4 660 518.8C660.9 516.2 661.5 513.8 662.3 510.8C663.2 507.8 664.2 504.2 665.2 500.8C666.2 497.4 667.3 493.8 668.4 490.5C669.5 487.2 670.5 484.3 671.6 481.1C672.8 477.9 673.9 474.6 675.1 471.1C676.4 467.7 677.8 463.7 679.1 460.1C680.5 456.6 682 452.9 683.4 449.7C684.9 446.4 686.3 443.6 687.7 440.8C689.2 438 690.6 435.6 692 433C693.5 430.5 694.9 428 696.3 425.7C697.7 423.4 699.1 421.1 700.4 419.3C701.6 417.5 702.8 416.1 704 415C705.1 413.9 706.3 413.4 707.5 412.7C708.8 411.9 710.1 411.4 711.5 410.5C712.8 409.6 714.2 408.3 715.7 407.4C717.1 406.4 718.5 405.3 719.9 404.7C721.4 404 722.8 403.7 724.2 403.5C725.7 403.3 727.1 403.4 728.5 403.7C730 403.9 731.5 404.3 733.1 405C734.7 405.7 736.6 406.7 738.4 408.1C740.2 409.4 742.1 411.3 743.8 413.1C745.5 415 747.1 417.1 748.6 419.2C750.1 421.3 751.5 423.5 752.9 425.8C754.3 428.1 755.7 430.5 757.2 433C758.6 435.5 760 438.2 761.5 440.8C762.9 443.5 764.3 446.3 765.8 448.9C767.2 451.4 768.6 454.1 770.1 456.2C771.5 458.4 772.9 460.4 774.4 461.7C775.8 463 777.2 464 778.7 464.2C780.1 464.3 781.5 463.8 782.9 462.6C784.4 461.4 785.8 459.4 787.2 457.1C788.7 454.7 790.1 451.7 791.5 448.6C793 445.5 794.4 441.9 795.8 438.7C797.3 435.4 798.7 432 800.1 429C801.6 426 802.9 423.2 804.4 420.7C805.9 418.1 807.4 416.1 809 413.7C810.6 411.3 812.3 409 814.1 406.5C815.9 403.9 817.8 400.9 819.7 398.4C821.7 395.9 823.8 393.5 825.9 391.6C828 389.7 830.2 388.1 832.3 386.8C834.5 385.5 836.6 384.5 838.8 383.8C840.9 383.1 843.1 382.8 845.2 382.7C847.4 382.5 849.5 382.8 851.7 383C853.8 383.3 856 383.8 858.1 384.4C860.2 385 862.4 385.7 864.5 386.6C866.7 387.6 868.8 388.6 871 389.9C873.1 391.2 875.3 392.8 877.4 394.5C879.6 396.1 881.7 397.9 883.9 399.7C886 401.6 888.2 403.4 890.3 405.4C892.5 407.4 894.6 409.5 896.8 411.8C898.9 414.1 901.1 416.7 903.2 419.2C905.3 421.8 907.4 424.4 909.4 427.2C911.3 429.9 913 432.7 914.7 435.6C916.4 438.5 917.9 441.7 919.6 444.8C921.2 448 922.9 451.2 924.7 454.5C926.4 457.8 928.3 461.1 930 464.4C931.8 467.8 933.5 471.4 935.1 474.6C936.7 477.9 938.2 481.3 939.7 484C941.2 486.8 942.6 489.5 944 491.2C945.4 492.9 946.7 494.1 948 494.3C949.3 494.5 950.4 493.6 951.8 492.2C953.1 490.9 954.5 488.6 956.1 486.2C957.7 483.8 959.5 480.9 961.4 477.9C963.4 474.9 965.5 471.5 967.6 468.2C969.7 464.8 971.9 461.3 974.1 457.7C976.2 454.2 978.4 450.4 980.5 447C982.6 443.5 984.8 440 986.9 437.1C989.1 434.1 991.2 431.5 993.4 429.3C995.5 427.1 997.7 425.3 999.8 423.7C1002 422.2 1004.1 421 1006.3 419.9C1008.4 418.9 1010.6 418.1 1012.7 417.5C1014.8 416.9 1016.8 416.4 1018.6 416.1C1020.4 415.8 1022 415.7 1023.7 415.7C1025.4 415.8 1027 416.1 1028.8 416.6C1030.6 417.1 1032.5 417.9 1034.4 419C1036.4 420 1038.5 421.4 1040.6 422.9C1042.7 424.4 1044.9 426.1 1047.1 428C1049.2 430 1051.4 432.2 1053.5 434.6C1055.6 437.1 1057.8 439.9 1059.7 442.7C1061.6 445.5 1063.4 448.4 1065 451.3C1066.7 454.2 1068 457.2 1069.3 460.1C1070.6 463.1 1071.7 466.3 1072.8 469C1074 471.7 1075.1 474.2 1076.3 476.1C1077.6 478 1078.9 479.4 1080.3 480.5C1081.6 481.6 1083.1 482.2 1084.6 482.6C1086.2 483.1 1087.8 483.2 1089.4 483.1C1090.9 483 1092.4 482.6 1094 481.9C1095.5 481.2 1096.9 480 1098.5 478.8C1100.1 477.6 1101.9 476.1 1103.6 474.7C1105.4 473.3 1107.2 471.8 1109 470.2C1110.7 468.7 1112.5 467 1114.1 465.5C1115.7 464 1117.2 462.5 1118.7 461.4C1120.1 460.3 1121.5 459.4 1122.9 458.8C1124.4 458.3 1125.9 458.1 1127.5 458.2C1129.1 458.2 1130.9 458.6 1132.6 459.3C1134.4 460.1 1136.2 461.2 1138 462.6C1139.7 463.9 1141.5 465.7 1143.1 467.7C1144.6 469.6 1146.1 471.7 1147.4 474.1C1148.7 476.5 1149.7 479.2 1150.9 482.1C1152 485.1 1153 488.7 1154.1 492.1C1155.1 495.5 1156.2 499.1 1157.1 502.4C1158.1 505.7 1159 508.6 1159.9 511.9C1160.9 515.1 1161.8 518 1162.8 521.8C1163.8 525.5 1164.9 529.7 1166.1 534.2C1167.2 538.6 1168.5 543.7 1169.7 548.7C1170.9 553.6 1172.2 558.7 1173.4 563.7C1174.6 568.7 1175.8 573.7 1177 578.7C1178.2 583.7 1179.4 588.7 1180.5 593.7C1181.7 598.8 1182.9 603.8 1184 608.8C1185.2 613.8 1186.3 618.9 1187.4 623.8C1188.4 628.7 1189.4 633.6 1190.3 638.3C1191.2 643 1192 647.6 1192.7 651.7C1193.5 655.9 1194.1 660.1 1194.8 663.3C1195.4 666.4 1196 668.9 1196.5 670.5C1197.1 672.1 1197.6 672.5 1198.3 672.7C1198.9 672.8 1199.6 672.1 1200.5 671.3C1201.4 670.5 1202.4 669.1 1203.5 667.8C1204.5 666.5 1205.7 665 1207 663.6C1208.2 662.3 1209.6 661 1211 659.9C1212.4 658.8 1213.9 657.9 1215.3 657C1216.7 656.1 1218.1 655.6 1219.5 654.6C1220.8 653.6 1222.1 652.6 1223.4 650.9C1224.6 649.3 1225.8 647.1 1227 644.7C1228.1 642.4 1229.2 639.5 1230.3 636.7C1231.4 633.9 1232.5 631 1233.5 628.1C1234.6 625.2 1235.7 622.4 1236.8 619.5C1237.8 616.6 1238.9 613.7 1240 610.9C1241 608.1 1242.1 605.2 1243.2 602.6C1244.3 600 1245.3 597.4 1246.4 595.1C1247.5 592.8 1248.5 590.7 1249.6 588.9C1250.8 587.1 1251.9 585.5 1253.1 584.1C1254.4 582.6 1255.8 581.2 1257.2 580.2C1258.5 579.1 1259.9 578.1 1261.2 577.6C1262.4 577 1263.5 576.8 1264.7 576.9C1265.8 577 1266.9 577.4 1268.2 578.2C1269.4 578.9 1270.8 580 1272.2 581.4C1273.6 582.8 1275.1 584.5 1276.5 586.5C1277.9 588.5 1279.3 590.9 1280.5 593.5C1281.8 596.1 1282.9 599.2 1284 602.1C1285.1 604.9 1286.1 608 1287.2 610.7C1288.3 613.3 1289.4 615.9 1290.4 618.2C1291.5 620.5 1292.6 622.6 1293.7 624.3C1294.7 626 1295.7 627.5 1296.6 628.4C1297.5 629.2 1298.4 629.7 1299.3 629.6C1300.2 629.5 1301.2 629 1302.2 627.9C1303.3 626.8 1304.4 625 1305.5 622.9C1306.5 620.8 1307.6 617.9 1308.7 615.2C1309.8 612.5 1310.9 609.5 1312.2 606.6C1313.4 603.8 1314.8 600.8 1316.2 598C1317.6 595.3 1319.1 592.5 1320.5 590.3C1321.9 588 1323.4 586.2 1324.8 584.8C1326.2 583.4 1327.6 582.6 1328.8 582C1330.1 581.4 1331.1 581.2 1332.3 581.4C1333.5 581.6 1334.5 582.1 1335.8 583C1337.1 583.8 1338.4 585.2 1339.8 586.6C1341.2 588 1342.7 589.9 1344.1 591.6C1345.6 593.3 1347 595 1348.4 596.7C1349.8 598.4 1351.3 600 1352.7 601.8C1354.1 603.6 1355.6 605.7 1357 607.7C1358.4 609.7 1359.9 612 1361.3 613.9C1362.7 615.8 1364.1 617.6 1365.3 619C1366.6 620.4 1367.7 621.5 1368.8 622.2C1369.9 622.9 1371 623.3 1372 623C1373.1 622.7 1374.1 622.2 1375 620.6C1375.9 619 1376.6 616.6 1377.4 613.6C1378.2 610.7 1378.9 606.6 1379.8 602.9C1380.8 599.1 1381.8 595 1383 591.1C1384.2 587.1 1385.7 583.2 1387.1 579.3C1388.5 575.3 1390 571.3 1391.4 567.4C1392.7 563.6 1394.1 559.6 1395.4 556.2C1396.6 552.8 1397.7 549.7 1398.9 547C1400 544.4 1401.1 542.3 1402.4 540.1C1403.7 537.8 1405.1 535.7 1406.7 533.6C1408.2 531.6 1410.1 529.4 1411.8 527.8C1413.4 526.2 1415.1 525 1416.5 524.2C1417.9 523.3 1419.1 523.1 1420.4 522.8C1421.7 522.6 1422.9 522.5 1424.3 522.7C1425.7 522.8 1427.2 523.1 1428.6 523.7C1430 524.4 1431.5 525.3 1432.9 526.5C1434.3 527.6 1435.7 529 1437.2 530.6C1438.6 532.1 1440 533.8 1441.5 535.6C1442.9 537.3 1444.4 539.3 1445.8 541C1447.2 542.8 1448.6 544.7 1449.8 546C1451 547.3 1452.2 548.4 1453.2 548.9C1454.2 549.4 1455.1 549.4 1455.9 548.8C1456.8 548.2 1457.4 546.9 1458.2 545.2C1459 543.6 1459.8 541.3 1460.7 538.9C1461.7 536.5 1462.9 533.7 1464.2 530.9C1465.4 528.1 1467 525.2 1468.3 522.1C1469.7 519 1471 515.8 1472.3 512.2C1473.6 508.6 1474.8 504.6 1476.1 500.6C1477.4 496.6 1478.7 492.2 1480.1 488.3C1481.6 484.4 1483.1 480.6 1484.7 477C1486.3 473.5 1488 470.1 1489.8 466.8C1491.6 463.6 1493.5 460.6 1495.4 457.7C1497.4 454.8 1499.5 452 1501.6 449.4C1503.7 446.8 1505.9 444.2 1508 442C1510.2 439.8 1512.3 437.9 1514.5 436.2C1516.6 434.5 1518.8 433.1 1520.9 432C1523.1 430.8 1525.2 430 1527.4 429.4C1529.5 428.9 1531.7 428.7 1533.8 428.6C1536 428.5 1538.1 428.6 1540.2 428.9C1542.4 429.1 1544.6 429.5 1546.7 430.1C1548.8 430.6 1550.9 431.4 1552.9 432.1C1554.8 432.9 1556.4 433.8 1558.2 434.6C1560 435.4 1561.5 436.2 1563.6 436.8C1565.7 437.5 1568 438.1 1570.6 438.7C1573.1 439.2 1576.1 439.6 1578.9 440C1581.7 440.3 1584.6 440.5 1587.5 440.6C1590.4 440.7 1593.3 440.7 1596.1 440.8C1598.9 440.8 1601.6 440.8 1604.1 440.9C1606.6 441.1 1608.9 441.3 1611.1 441.6C1613.3 441.9 1615.4 442.3 1617.6 442.7C1619.7 443.2 1621.8 443.7 1623.7 444.5C1625.7 445.3 1627.6 446.3 1629.4 447.6C1631.2 449 1632.9 450.7 1634.5 452.6C1636.1 454.6 1637.5 456.9 1639 459.3C1640.5 461.7 1641.9 464.5 1643.3 467.1C1644.8 469.7 1646.2 472.3 1647.6 474.9C1649 477.5 1650.5 480 1651.9 482.7C1653.3 485.4 1654.8 488.2 1656.2 491.3C1657.6 494.3 1659.1 497.8 1660.4 501.1C1661.7 504.3 1662.9 507.7 1664 510.8C1665.2 513.9 1666.1 516.4 1667.1 519.6C1668.1 522.8 1669.1 526.1 1670.1 529.9C1671 533.6 1672 538 1672.9 542.2C1673.8 546.4 1674.6 550.6 1675.4 554.8C1676.2 559 1676.9 563.1 1677.7 567.4C1678.4 571.7 1679.1 576.4 1679.8 580.6C1680.5 584.8 1681.3 589.2 1682 592.7C1682.7 596.1 1683.4 599.1 1684.1 601.3C1684.8 603.5 1685.6 604.9 1686.3 605.9C1687 607 1687.7 607.5 1688.4 607.6C1689.1 607.8 1689.8 607.8 1690.6 607C1691.3 606.3 1692 605 1693 603.1C1693.9 601.3 1694.9 598.5 1696.2 595.9C1697.4 593.3 1698.9 590.1 1700.5 587.3C1702.1 584.5 1703.8 581.7 1705.6 579.4C1707.3 577 1709.2 574.9 1711 573C1712.7 571.1 1714.4 569.6 1716.1 568.1C1717.7 566.6 1719.1 565.2 1720.6 564.2C1722.1 563.2 1723.4 562.4 1724.9 562C1726.4 561.5 1727.9 561.5 1729.5 561.6C1731.1 561.7 1732.8 562.2 1734.6 562.8C1736.3 563.4 1738.2 564.2 1739.9 565.3C1741.7 566.4 1743.4 567.7 1745 569.3C1746.7 571 1748.2 572.9 1749.6 575.2C1751 577.6 1752.4 580.5 1753.6 583.5C1754.9 586.6 1756 590.2 1757 593.7C1757.9 597.3 1758.7 601.1 1759.5 605C1760.2 609 1760.8 613.3 1761.4 617.4C1762 621.4 1762.6 625.7 1763.1 629.2C1763.6 632.7 1764.1 635.6 1764.5 638.3C1765 641 1765.5 644.1 1765.7 645.3" fill="none" stroke="#000" stroke-width="3.3" stroke-linejoin="round" stroke-linecap="round"/>
<line x1="72" y1="497.5" x2="1776" y2="497.5" stroke="#333" stroke-width="3" stroke-dasharray="4 6" stroke-linecap="round"/>
<g fill="#f00"><circle cx="117.5" cy="133.4" r="2.45"/><circle cx="205.3" cy="128" r="2.45"/><circle cx="164.7" cy="283.9" r="2.45"/><circle cx="225.5" cy="277.7" r="2.45"/><circle cx="218.8" cy="298.3" r="2.45"/><circle cx="286.3" cy="287.3" r="2.45"/><circle cx="299.8" cy="299.2" r="2.45"/><circle cx="340.3" cy="298.7" r="2.45"/><circle cx="367.3" cy="228.9" r="2.45"/><circle cx="374.1" cy="306.9" r="2.45"/><circle cx="394.3" cy="296.6" r="2.45"/><circle cx="407.8" cy="244.4" r="2.45"/><circle cx="77" cy="379.8" r="2.45"/><circle cx="83.7" cy="330.8" r="2.45"/><circle cx="90.5" cy="494.2" r="2.45"/><circle cx="97.2" cy="485" r="2.45"/><circle cx="104" cy="434.3" r="2.45"/><circle cx="110.7" cy="440.3" r="2.45"/><circle cx="124.2" cy="372.3" r="2.45"/><circle cx="131" cy="406" r="2.45"/><circle cx="137.7" cy="412" r="2.45"/><circle cx="144.5" cy="434.1" r="2.45"/><circle cx="151.2" cy="397" r="2.45"/><circle cx="158" cy="334.7" r="2.45"/><circle cx="171.5" cy="421.4" r="2.45"/><circle cx="178.2" cy="400.4" r="2.45"/><circle cx="185" cy="489.7" r="2.45"/><circle cx="191.8" cy="369.9" r="2.45"/><circle cx="198.5" cy="335.5" r="2.45"/><circle cx="212" cy="455.6" r="2.45"/><circle cx="232.3" cy="485.2" r="2.45"/><circle cx="239" cy="338.3" r="2.45"/><circle cx="245.8" cy="334.7" r="2.45"/><circle cx="252.5" cy="424.4" r="2.45"/><circle cx="259.3" cy="403.6" r="2.45"/><circle cx="272.8" cy="350.6" r="2.45"/><circle cx="279.5" cy="459.9" r="2.45"/><circle cx="293" cy="372.3" r="2.45"/><circle cx="313.3" cy="488" r="2.45"/><circle cx="320.1" cy="378.5" r="2.45"/><circle cx="326.8" cy="447.2" r="2.45"/><circle cx="333.6" cy="383.9" r="2.45"/><circle cx="347.1" cy="420.8" r="2.45"/><circle cx="353.8" cy="445.5" r="2.45"/><circle cx="360.6" cy="420.1" r="2.45"/><circle cx="380.8" cy="325" r="2.45"/><circle cx="387.6" cy="363.5" r="2.45"/><circle cx="401.1" cy="471.5" r="2.45"/><circle cx="70.2" cy="523.5" r="2.45"/><circle cx="461.9" cy="250.6" r="2.45"/><circle cx="448.4" cy="278.1" r="2.45"/><circle cx="583.4" cy="222.5" r="2.45"/><circle cx="590.2" cy="297.6" r="2.45"/><circle cx="421.3" cy="419.1" r="2.45"/><circle cx="441.6" cy="406" r="2.45"/><circle cx="455.1" cy="402.3" r="2.45"/><circle cx="468.6" cy="377" r="2.45"/><circle cx="475.4" cy="353.1" r="2.45"/><circle cx="482.1" cy="416.3" r="2.45"/><circle cx="488.9" cy="323.1" r="2.45"/><circle cx="495.6" cy="445.9" r="2.45"/><circle cx="502.4" cy="383.4" r="2.45"/><circle cx="522.6" cy="430.7" r="2.45"/><circle cx="529.4" cy="337.9" r="2.45"/><circle cx="549.6" cy="404.3" r="2.45"/><circle cx="556.4" cy="423.8" r="2.45"/><circle cx="563.2" cy="437.8" r="2.45"/><circle cx="569.9" cy="325.2" r="2.45"/><circle cx="576.7" cy="402.1" r="2.45"/><circle cx="596.9" cy="486.5" r="2.45"/><circle cx="603.7" cy="460.9" r="2.45"/><circle cx="610.4" cy="401.9" r="2.45"/><circle cx="650.9" cy="430" r="2.45"/><circle cx="657.7" cy="459.9" r="2.45"/><circle cx="671.2" cy="479.4" r="2.45"/><circle cx="678" cy="505.2" r="2.45"/><circle cx="684.7" cy="467.6" r="2.45"/><circle cx="691.5" cy="453" r="2.45"/><circle cx="698.2" cy="431.5" r="2.45"/><circle cx="705" cy="438.8" r="2.45"/><circle cx="718.5" cy="439.5" r="2.45"/><circle cx="725.2" cy="389.2" r="2.45"/><circle cx="732" cy="345" r="2.45"/><circle cx="738.7" cy="328.2" r="2.45"/><circle cx="745.5" cy="444.4" r="2.45"/><circle cx="414.6" cy="513.7" r="2.45"/><circle cx="434.8" cy="516.9" r="2.45"/><circle cx="428.1" cy="545.4" r="2.45"/><circle cx="509.1" cy="523.3" r="2.45"/><circle cx="515.9" cy="518.6" r="2.45"/><circle cx="536.1" cy="520.3" r="2.45"/><circle cx="542.9" cy="538.1" r="2.45"/><circle cx="644.2" cy="531.9" r="2.45"/><circle cx="664.4" cy="566.7" r="2.45"/><circle cx="617.2" cy="584.9" r="2.45"/><circle cx="637.4" cy="610.1" r="2.45"/><circle cx="623.9" cy="647.4" r="2.45"/><circle cx="630.7" cy="675.6" r="2.45"/><circle cx="833.3" cy="189.6" r="2.45"/><circle cx="813" cy="230" r="2.45"/><circle cx="867" cy="297.4" r="2.45"/><circle cx="826.5" cy="304.3" r="2.45"/><circle cx="1015.6" cy="307.5" r="2.45"/><circle cx="752.2" cy="453.6" r="2.45"/><circle cx="759" cy="392.4" r="2.45"/><circle cx="765.7" cy="382.4" r="2.45"/><circle cx="799.5" cy="495.9" r="2.45"/><circle cx="806.3" cy="355.9" r="2.45"/><circle cx="819.8" cy="374" r="2.45"/><circle cx="840" cy="445.9" r="2.45"/><circle cx="846.8" cy="465.5" r="2.45"/><circle cx="853.5" cy="402.8" r="2.45"/><circle cx="860.3" cy="350.4" r="2.45"/><circle cx="873.8" cy="391.6" r="2.45"/><circle cx="880.5" cy="490.6" r="2.45"/><circle cx="887.3" cy="378.5" r="2.45"/><circle cx="894" cy="380" r="2.45"/><circle cx="900.8" cy="406.6" r="2.45"/><circle cx="907.5" cy="353.8" r="2.45"/><circle cx="914.3" cy="407" r="2.45"/><circle cx="921" cy="491.9" r="2.45"/><circle cx="927.8" cy="433.5" r="2.45"/><circle cx="934.6" cy="414.8" r="2.45"/><circle cx="961.6" cy="466.3" r="2.45"/><circle cx="968.3" cy="410.7" r="2.45"/><circle cx="975.1" cy="373.3" r="2.45"/><circle cx="981.8" cy="444" r="2.45"/><circle cx="988.6" cy="488" r="2.45"/><circle cx="995.3" cy="369" r="2.45"/><circle cx="1002.1" cy="413.7" r="2.45"/><circle cx="1008.8" cy="415" r="2.45"/><circle cx="1029.1" cy="420.8" r="2.45"/><circle cx="1035.8" cy="363.7" r="2.45"/><circle cx="1042.6" cy="431.3" r="2.45"/><circle cx="1049.4" cy="340.5" r="2.45"/><circle cx="1056.1" cy="377.6" r="2.45"/><circle cx="1062.9" cy="415.2" r="2.45"/><circle cx="1069.6" cy="433.9" r="2.45"/><circle cx="1083.1" cy="510.3" r="2.45"/><circle cx="1089.9" cy="460.9" r="2.45"/><circle cx="772.5" cy="516.4" r="2.45"/><circle cx="792.7" cy="517.5" r="2.45"/><circle cx="786" cy="536" r="2.45"/><circle cx="779.2" cy="542.4" r="2.45"/><circle cx="941.3" cy="536.2" r="2.45"/><circle cx="954.8" cy="579.1" r="2.45"/><circle cx="948.1" cy="586.4" r="2.45"/><circle cx="1022.3" cy="514.5" r="2.45"/><circle cx="1076.4" cy="625.7" r="2.45"/><circle cx="1096.6" cy="471.7" r="2.45"/><circle cx="1103.4" cy="495.9" r="2.45"/><circle cx="1110.1" cy="415.8" r="2.45"/><circle cx="1116.9" cy="470.6" r="2.45"/><circle cx="1130.4" cy="375.9" r="2.45"/><circle cx="1137.1" cy="359.2" r="2.45"/><circle cx="1143.9" cy="361.3" r="2.45"/><circle cx="1150.6" cy="378.9" r="2.45"/><circle cx="1407.2" cy="437.3" r="2.45"/><circle cx="1414" cy="505.2" r="2.45"/><circle cx="1123.6" cy="571.2" r="2.45"/><circle cx="1157.4" cy="539.4" r="2.45"/><circle cx="1164.1" cy="565.2" r="2.45"/><circle cx="1170.9" cy="551.2" r="2.45"/><circle cx="1177.7" cy="601.7" r="2.45"/><circle cx="1184.4" cy="614.8" r="2.45"/><circle cx="1191.2" cy="655.6" r="2.45"/><circle cx="1204.7" cy="664.4" r="2.45"/><circle cx="1211.4" cy="623.4" r="2.45"/><circle cx="1218.2" cy="659.9" r="2.45"/><circle cx="1224.9" cy="672.1" r="2.45"/><circle cx="1231.7" cy="655.2" r="2.45"/><circle cx="1238.4" cy="602.3" r="2.45"/><circle cx="1245.2" cy="594.2" r="2.45"/><circle cx="1251.9" cy="574" r="2.45"/><circle cx="1258.7" cy="512.8" r="2.45"/><circle cx="1265.4" cy="564.5" r="2.45"/><circle cx="1272.2" cy="569.7" r="2.45"/><circle cx="1278.9" cy="573.3" r="2.45"/><circle cx="1285.7" cy="624" r="2.45"/><circle cx="1292.5" cy="623.6" r="2.45"/><circle cx="1299.2" cy="655.2" r="2.45"/><circle cx="1306" cy="660.7" r="2.45"/><circle cx="1312.7" cy="610.7" r="2.45"/><circle cx="1319.5" cy="541.4" r="2.45"/><circle cx="1326.2" cy="539.8" r="2.45"/><circle cx="1333" cy="536.6" r="2.45"/><circle cx="1339.7" cy="626" r="2.45"/><circle cx="1346.5" cy="600" r="2.45"/><circle cx="1353.2" cy="569.7" r="2.45"/><circle cx="1360" cy="646.4" r="2.45"/><circle cx="1366.7" cy="598.3" r="2.45"/><circle cx="1373.5" cy="642.1" r="2.45"/><circle cx="1380.2" cy="674.9" r="2.45"/><circle cx="1387" cy="577" r="2.45"/><circle cx="1393.7" cy="533.6" r="2.45"/><circle cx="1400.5" cy="544.4" r="2.45"/><circle cx="1420.8" cy="514.7" r="2.45"/><circle cx="1427.5" cy="533.6" r="2.45"/><circle cx="1434.3" cy="510.3" r="2.45"/><circle cx="1441" cy="471.7" r="2.45"/><circle cx="1468" cy="512" r="2.45"/><circle cx="1474.8" cy="462" r="2.45"/><circle cx="1481.5" cy="471.5" r="2.45"/><circle cx="1488.3" cy="456" r="2.45"/><circle cx="1495" cy="392.4" r="2.45"/><circle cx="1501.8" cy="433.9" r="2.45"/><circle cx="1508.5" cy="453.4" r="2.45"/><circle cx="1515.3" cy="418.2" r="2.45"/><circle cx="1522" cy="422.3" r="2.45"/><circle cx="1528.8" cy="471.9" r="2.45"/><circle cx="1535.6" cy="384.7" r="2.45"/><circle cx="1542.3" cy="317.7" r="2.45"/><circle cx="1549.1" cy="374.6" r="2.45"/><circle cx="1555.8" cy="484.8" r="2.45"/><circle cx="1569.3" cy="377" r="2.45"/><circle cx="1576.1" cy="401.2" r="2.45"/><circle cx="1582.8" cy="329.1" r="2.45"/><circle cx="1589.6" cy="432" r="2.45"/><circle cx="1596.3" cy="498.5" r="2.45"/><circle cx="1609.8" cy="369.3" r="2.45"/><circle cx="1616.6" cy="427" r="2.45"/><circle cx="1623.3" cy="319.7" r="2.45"/><circle cx="1630.1" cy="360" r="2.45"/><circle cx="1636.8" cy="483.3" r="2.45"/><circle cx="1650.3" cy="462.4" r="2.45"/><circle cx="1657.1" cy="415.4" r="2.45"/><circle cx="1663.9" cy="446.8" r="2.45"/><circle cx="1670.6" cy="489.3" r="2.45"/><circle cx="1711.1" cy="498.5" r="2.45"/><circle cx="1717.9" cy="511.4" r="2.45"/><circle cx="1738.1" cy="421" r="2.45"/><circle cx="1447.8" cy="530.2" r="2.45"/><circle cx="1454.5" cy="603.2" r="2.45"/><circle cx="1461.3" cy="648.1" r="2.45"/><circle cx="1562.6" cy="559.6" r="2.45"/><circle cx="1603.1" cy="541.4" r="2.45"/><circle cx="1643.6" cy="553.6" r="2.45"/><circle cx="1677.4" cy="599.1" r="2.45"/><circle cx="1684.1" cy="662" r="2.45"/><circle cx="1690.9" cy="625.7" r="2.45"/><circle cx="1697.6" cy="637.1" r="2.45"/><circle cx="1704.4" cy="545.9" r="2.45"/><circle cx="1724.6" cy="636.5" r="2.45"/><circle cx="1731.4" cy="595.2" r="2.45"/><circle cx="1744.9" cy="527" r="2.45"/><circle cx="1751.6" cy="564.5" r="2.45"/><circle cx="1758.4" cy="624" r="2.45"/><circle cx="1198" cy="709.2" r="2.45"/></g><g fill="#ff7a5c"><circle cx="117.5" cy="133.4" r="0.9"/><circle cx="205.3" cy="128" r="0.9"/><circle cx="164.7" cy="283.9" r="0.9"/><circle cx="225.5" cy="277.7" r="0.9"/><circle cx="218.8" cy="298.3" r="0.9"/><circle cx="286.3" cy="287.3" r="0.9"/><circle cx="299.8" cy="299.2" r="0.9"/><circle cx="340.3" cy="298.7" r="0.9"/><circle cx="367.3" cy="228.9" r="0.9"/><circle cx="374.1" cy="306.9" r="0.9"/><circle cx="394.3" cy="296.6" r="0.9"/><circle cx="407.8" cy="244.4" r="0.9"/><circle cx="77" cy="379.8" r="0.9"/><circle cx="83.7" cy="330.8" r="0.9"/><circle cx="90.5" cy="494.2" r="0.9"/><circle cx="97.2" cy="485" r="0.9"/><circle cx="104" cy="434.3" r="0.9"/><circle cx="110.7" cy="440.3" r="0.9"/><circle cx="124.2" cy="372.3" r="0.9"/><circle cx="131" cy="406" r="0.9"/><circle cx="137.7" cy="412" r="0.9"/><circle cx="144.5" cy="434.1" r="0.9"/><circle cx="151.2" cy="397" r="0.9"/><circle cx="158" cy="334.7" r="0.9"/><circle cx="171.5" cy="421.4" r="0.9"/><circle cx="178.2" cy="400.4" r="0.9"/><circle cx="185" cy="489.7" r="0.9"/><circle cx="191.8" cy="369.9" r="0.9"/><circle cx="198.5" cy="335.5" r="0.9"/><circle cx="212" cy="455.6" r="0.9"/><circle cx="232.3" cy="485.2" r="0.9"/><circle cx="239" cy="338.3" r="0.9"/><circle cx="245.8" cy="334.7" r="0.9"/><circle cx="252.5" cy="424.4" r="0.9"/><circle cx="259.3" cy="403.6" r="0.9"/><circle cx="272.8" cy="350.6" r="0.9"/><circle cx="279.5" cy="459.9" r="0.9"/><circle cx="293" cy="372.3" r="0.9"/><circle cx="313.3" cy="488" r="0.9"/><circle cx="320.1" cy="378.5" r="0.9"/><circle cx="326.8" cy="447.2" r="0.9"/><circle cx="333.6" cy="383.9" r="0.9"/><circle cx="347.1" cy="420.8" r="0.9"/><circle cx="353.8" cy="445.5" r="0.9"/><circle cx="360.6" cy="420.1" r="0.9"/><circle cx="380.8" cy="325" r="0.9"/><circle cx="387.6" cy="363.5" r="0.9"/><circle cx="401.1" cy="471.5" r="0.9"/><circle cx="70.2" cy="523.5" r="0.9"/><circle cx="461.9" cy="250.6" r="0.9"/><circle cx="448.4" cy="278.1" r="0.9"/><circle cx="583.4" cy="222.5" r="0.9"/><circle cx="590.2" cy="297.6" r="0.9"/><circle cx="421.3" cy="419.1" r="0.9"/><circle cx="441.6" cy="406" r="0.9"/><circle cx="455.1" cy="402.3" r="0.9"/><circle cx="468.6" cy="377" r="0.9"/><circle cx="475.4" cy="353.1" r="0.9"/><circle cx="482.1" cy="416.3" r="0.9"/><circle cx="488.9" cy="323.1" r="0.9"/><circle cx="495.6" cy="445.9" r="0.9"/><circle cx="502.4" cy="383.4" r="0.9"/><circle cx="522.6" cy="430.7" r="0.9"/><circle cx="529.4" cy="337.9" r="0.9"/><circle cx="549.6" cy="404.3" r="0.9"/><circle cx="556.4" cy="423.8" r="0.9"/><circle cx="563.2" cy="437.8" r="0.9"/><circle cx="569.9" cy="325.2" r="0.9"/><circle cx="576.7" cy="402.1" r="0.9"/><circle cx="596.9" cy="486.5" r="0.9"/><circle cx="603.7" cy="460.9" r="0.9"/><circle cx="610.4" cy="401.9" r="0.9"/><circle cx="650.9" cy="430" r="0.9"/><circle cx="657.7" cy="459.9" r="0.9"/><circle cx="671.2" cy="479.4" r="0.9"/><circle cx="678" cy="505.2" r="0.9"/><circle cx="684.7" cy="467.6" r="0.9"/><circle cx="691.5" cy="453" r="0.9"/><circle cx="698.2" cy="431.5" r="0.9"/><circle cx="705" cy="438.8" r="0.9"/><circle cx="718.5" cy="439.5" r="0.9"/><circle cx="725.2" cy="389.2" r="0.9"/><circle cx="732" cy="345" r="0.9"/><circle cx="738.7" cy="328.2" r="0.9"/><circle cx="745.5" cy="444.4" r="0.9"/><circle cx="414.6" cy="513.7" r="0.9"/><circle cx="434.8" cy="516.9" r="0.9"/><circle cx="428.1" cy="545.4" r="0.9"/><circle cx="509.1" cy="523.3" r="0.9"/><circle cx="515.9" cy="518.6" r="0.9"/><circle cx="536.1" cy="520.3" r="0.9"/><circle cx="542.9" cy="538.1" r="0.9"/><circle cx="644.2" cy="531.9" r="0.9"/><circle cx="664.4" cy="566.7" r="0.9"/><circle cx="617.2" cy="584.9" r="0.9"/><circle cx="637.4" cy="610.1" r="0.9"/><circle cx="623.9" cy="647.4" r="0.9"/><circle cx="630.7" cy="675.6" r="0.9"/><circle cx="833.3" cy="189.6" r="0.9"/><circle cx="813" cy="230" r="0.9"/><circle cx="867" cy="297.4" r="0.9"/><circle cx="826.5" cy="304.3" r="0.9"/><circle cx="1015.6" cy="307.5" r="0.9"/><circle cx="752.2" cy="453.6" r="0.9"/><circle cx="759" cy="392.4" r="0.9"/><circle cx="765.7" cy="382.4" r="0.9"/><circle cx="799.5" cy="495.9" r="0.9"/><circle cx="806.3" cy="355.9" r="0.9"/><circle cx="819.8" cy="374" r="0.9"/><circle cx="840" cy="445.9" r="0.9"/><circle cx="846.8" cy="465.5" r="0.9"/><circle cx="853.5" cy="402.8" r="0.9"/><circle cx="860.3" cy="350.4" r="0.9"/><circle cx="873.8" cy="391.6" r="0.9"/><circle cx="880.5" cy="490.6" r="0.9"/><circle cx="887.3" cy="378.5" r="0.9"/><circle cx="894" cy="380" r="0.9"/><circle cx="900.8" cy="406.6" r="0.9"/><circle cx="907.5" cy="353.8" r="0.9"/><circle cx="914.3" cy="407" r="0.9"/><circle cx="921" cy="491.9" r="0.9"/><circle cx="927.8" cy="433.5" r="0.9"/><circle cx="934.6" cy="414.8" r="0.9"/><circle cx="961.6" cy="466.3" r="0.9"/><circle cx="968.3" cy="410.7" r="0.9"/><circle cx="975.1" cy="373.3" r="0.9"/><circle cx="981.8" cy="444" r="0.9"/><circle cx="988.6" cy="488" r="0.9"/><circle cx="995.3" cy="369" r="0.9"/><circle cx="1002.1" cy="413.7" r="0.9"/><circle cx="1008.8" cy="415" r="0.9"/><circle cx="1029.1" cy="420.8" r="0.9"/><circle cx="1035.8" cy="363.7" r="0.9"/><circle cx="1042.6" cy="431.3" r="0.9"/><circle cx="1049.4" cy="340.5" r="0.9"/><circle cx="1056.1" cy="377.6" r="0.9"/><circle cx="1062.9" cy="415.2" r="0.9"/><circle cx="1069.6" cy="433.9" r="0.9"/><circle cx="1083.1" cy="510.3" r="0.9"/><circle cx="1089.9" cy="460.9" r="0.9"/><circle cx="772.5" cy="516.4" r="0.9"/><circle cx="792.7" cy="517.5" r="0.9"/><circle cx="786" cy="536" r="0.9"/><circle cx="779.2" cy="542.4" r="0.9"/><circle cx="941.3" cy="536.2" r="0.9"/><circle cx="954.8" cy="579.1" r="0.9"/><circle cx="948.1" cy="586.4" r="0.9"/><circle cx="1022.3" cy="514.5" r="0.9"/><circle cx="1076.4" cy="625.7" r="0.9"/><circle cx="1096.6" cy="471.7" r="0.9"/><circle cx="1103.4" cy="495.9" r="0.9"/><circle cx="1110.1" cy="415.8" r="0.9"/><circle cx="1116.9" cy="470.6" r="0.9"/><circle cx="1130.4" cy="375.9" r="0.9"/><circle cx="1137.1" cy="359.2" r="0.9"/><circle cx="1143.9" cy="361.3" r="0.9"/><circle cx="1150.6" cy="378.9" r="0.9"/><circle cx="1407.2" cy="437.3" r="0.9"/><circle cx="1414" cy="505.2" r="0.9"/><circle cx="1123.6" cy="571.2" r="0.9"/><circle cx="1157.4" cy="539.4" r="0.9"/><circle cx="1164.1" cy="565.2" r="0.9"/><circle cx="1170.9" cy="551.2" r="0.9"/><circle cx="1177.7" cy="601.7" r="0.9"/><circle cx="1184.4" cy="614.8" r="0.9"/><circle cx="1191.2" cy="655.6" r="0.9"/><circle cx="1204.7" cy="664.4" r="0.9"/><circle cx="1211.4" cy="623.4" r="0.9"/><circle cx="1218.2" cy="659.9" r="0.9"/><circle cx="1224.9" cy="672.1" r="0.9"/><circle cx="1231.7" cy="655.2" r="0.9"/><circle cx="1238.4" cy="602.3" r="0.9"/><circle cx="1245.2" cy="594.2" r="0.9"/><circle cx="1251.9" cy="574" r="0.9"/><circle cx="1258.7" cy="512.8" r="0.9"/><circle cx="1265.4" cy="564.5" r="0.9"/><circle cx="1272.2" cy="569.7" r="0.9"/><circle cx="1278.9" cy="573.3" r="0.9"/><circle cx="1285.7" cy="624" r="0.9"/><circle cx="1292.5" cy="623.6" r="0.9"/><circle cx="1299.2" cy="655.2" r="0.9"/><circle cx="1306" cy="660.7" r="0.9"/><circle cx="1312.7" cy="610.7" r="0.9"/><circle cx="1319.5" cy="541.4" r="0.9"/><circle cx="1326.2" cy="539.8" r="0.9"/><circle cx="1333" cy="536.6" r="0.9"/><circle cx="1339.7" cy="626" r="0.9"/><circle cx="1346.5" cy="600" r="0.9"/><circle cx="1353.2" cy="569.7" r="0.9"/><circle cx="1360" cy="646.4" r="0.9"/><circle cx="1366.7" cy="598.3" r="0.9"/><circle cx="1373.5" cy="642.1" r="0.9"/><circle cx="1380.2" cy="674.9" r="0.9"/><circle cx="1387" cy="577" r="0.9"/><circle cx="1393.7" cy="533.6" r="0.9"/><circle cx="1400.5" cy="544.4" r="0.9"/><circle cx="1420.8" cy="514.7" r="0.9"/><circle cx="1427.5" cy="533.6" r="0.9"/><circle cx="1434.3" cy="510.3" r="0.9"/><circle cx="1441" cy="471.7" r="0.9"/><circle cx="1468" cy="512" r="0.9"/><circle cx="1474.8" cy="462" r="0.9"/><circle cx="1481.5" cy="471.5" r="0.9"/><circle cx="1488.3" cy="456" r="0.9"/><circle cx="1495" cy="392.4" r="0.9"/><circle cx="1501.8" cy="433.9" r="0.9"/><circle cx="1508.5" cy="453.4" r="0.9"/><circle cx="1515.3" cy="418.2" r="0.9"/><circle cx="1522" cy="422.3" r="0.9"/><circle cx="1528.8" cy="471.9" r="0.9"/><circle cx="1535.6" cy="384.7" r="0.9"/><circle cx="1542.3" cy="317.7" r="0.9"/><circle cx="1549.1" cy="374.6" r="0.9"/><circle cx="1555.8" cy="484.8" r="0.9"/><circle cx="1569.3" cy="377" r="0.9"/><circle cx="1576.1" cy="401.2" r="0.9"/><circle cx="1582.8" cy="329.1" r="0.9"/><circle cx="1589.6" cy="432" r="0.9"/><circle cx="1596.3" cy="498.5" r="0.9"/><circle cx="1609.8" cy="369.3" r="0.9"/><circle cx="1616.6" cy="427" r="0.9"/><circle cx="1623.3" cy="319.7" r="0.9"/><circle cx="1630.1" cy="360" r="0.9"/><circle cx="1636.8" cy="483.3" r="0.9"/><circle cx="1650.3" cy="462.4" r="0.9"/><circle cx="1657.1" cy="415.4" r="0.9"/><circle cx="1663.9" cy="446.8" r="0.9"/><circle cx="1670.6" cy="489.3" r="0.9"/><circle cx="1711.1" cy="498.5" r="0.9"/><circle cx="1717.9" cy="511.4" r="0.9"/><circle cx="1738.1" cy="421" r="0.9"/><circle cx="1447.8" cy="530.2" r="0.9"/><circle cx="1454.5" cy="603.2" r="0.9"/><circle cx="1461.3" cy="648.1" r="0.9"/><circle cx="1562.6" cy="559.6" r="0.9"/><circle cx="1603.1" cy="541.4" r="0.9"/><circle cx="1643.6" cy="553.6" r="0.9"/><circle cx="1677.4" cy="599.1" r="0.9"/><circle cx="1684.1" cy="662" r="0.9"/><circle cx="1690.9" cy="625.7" r="0.9"/><circle cx="1697.6" cy="637.1" r="0.9"/><circle cx="1704.4" cy="545.9" r="0.9"/><circle cx="1724.6" cy="636.5" r="0.9"/><circle cx="1731.4" cy="595.2" r="0.9"/><circle cx="1744.9" cy="527" r="0.9"/><circle cx="1751.6" cy="564.5" r="0.9"/><circle cx="1758.4" cy="624" r="0.9"/><circle cx="1198" cy="709.2" r="0.9"/></g>
<g font-size="22" text-anchor="end" fill="#000"><text x="67.6" y="710.6">40</text><text x="67.6" y="692.6">50</text><text x="67.6" y="674.7">60</text><text x="67.6" y="656.7">70</text><text x="67.6" y="638.7">80</text><text x="67.6" y="620.8">90</text><text x="67.6" y="602.8">100</text><text x="67.6" y="584.8">110</text><text x="67.6" y="566.9">120</text><text x="67.6" y="548.9">130</text><text x="67.6" y="531">140</text><text x="67.6" y="513">150</text><text x="67.6" y="495">160</text><text x="67.6" y="477.1">170</text><text x="67.6" y="459.1">180</text><text x="67.6" y="441.1">190</text><text x="67.6" y="423.2">200</text><text x="67.6" y="405.2">210</text><text x="67.6" y="387.2">220</text><text x="67.6" y="369.3">230</text><text x="67.6" y="351.3">240</text><text x="67.6" y="333.3">250</text><text x="67.6" y="315.4">260</text><text x="67.6" y="297.4">270</text><text x="67.6" y="279.5">280</text><text x="67.6" y="261.5">290</text><text x="67.6" y="243.5">300</text><text x="67.6" y="225.6">310</text><text x="67.6" y="207.6">320</text><text x="67.6" y="189.6">330</text><text x="67.6" y="171.7">340</text><text x="67.6" y="153.7">350</text></g>
<g font-size="22" text-anchor="middle" fill="#000"><text x="70.2" y="723.8">166</text><text x="151.2" y="723.8">168</text><text x="232.3" y="723.8">170</text><text x="313.3" y="723.8">172</text><text x="394.3" y="723.8">174</text><text x="475.4" y="723.8">176</text><text x="556.4" y="723.8">178</text><text x="637.4" y="723.8">180</text><text x="718.5" y="723.8">182</text><text x="799.5" y="723.8">184</text><text x="880.5" y="723.8">186</text><text x="961.6" y="723.8">188</text><text x="1042.6" y="723.8">190</text><text x="1123.6" y="723.8">192</text><text x="1204.7" y="723.8">194</text><text x="1285.7" y="723.8">196</text><text x="1366.7" y="723.8">198</text><text x="1447.8" y="723.8">200</text><text x="1528.8" y="723.8">202</text><text x="1609.8" y="723.8">204</text><text x="1690.9" y="723.8">206</text><text x="1792" y="723.8">208</text></g>
<text x="1775.5" y="504.9" font-size="22" fill="#222">154.0</text>
<text x="754" y="464.2" font-size="39" font-weight="bold" fill="#7c7c7c" fill-opacity="0.71" textLength="328" lengthAdjust="spacingAndGlyphs">www.Vmus.net</text>
</svg>

<!-- social icons -->
<div id="socbg" class="abs" style="left:0;top:120.6px;width:31px;height:5px;background:linear-gradient(90deg,#8b8b8b 0%,#8a8a8a 55%,#6c6c6c 100%)"></div>
<div class="soc" style="top:125.4px;background:linear-gradient(#6a84bd,#4c69a8 45%,#3b5998)"><div class="abs" style="left:13.6px;top:2.6px;font:bold 41px/40px 'Liberation Sans',sans-serif;color:#fff">f</div></div>
<div class="soc" style="top:157.3px;background:linear-gradient(#b9ecf4,#8edbe8 60%,#7ccfe0)"><div class="abs" style="left:11px;top:-0.2px;font:bold 29px/34px 'Liberation Sans',sans-serif;color:#2b9ad4;text-shadow:0 -1px 0 #1c7fb8;transform:scaleX(1.55)">t</div></div>
<div class="soc" style="top:189px;border-radius:2px;background:#2a7bd2"><svg width="32" height="32" viewBox="0 0 32 32"><path d="M16 3.5L19.6 12.3L28.6 12.9L21.6 18.6L24 27.6L16 22.6L8 27.6L10.4 18.6L3.4 12.9L12.4 12.3Z" fill="#fdb62c"/><text x="16" y="21" font-family="Liberation Sans,sans-serif" font-weight="bold" font-size="10" text-anchor="middle" fill="#fff7dc">Z</text></svg></div>
<div class="soc" style="top:221.2px;background:#f7f7f7;box-shadow:inset 0 0 0 1.3px #d63030;border-radius:5px"><svg width="32" height="32" viewBox="0 0 32 32"><path d="M20 5.5a7 7 0 0 1 7 7" fill="none" stroke="#f39a1c" stroke-width="2.2" stroke-linecap="round"/><path d="M19.5 9.8a3.4 3.4 0 0 1 3.4 3.4" fill="none" stroke="#f39a1c" stroke-width="2" stroke-linecap="round"/><path d="M1.6 22C1.6 15.6 8.4 9 13.2 10C15.4 10.5 15.8 12.2 15.4 13.4C19.2 11.8 23 13.2 21.6 16.8C25 17.8 25 21.8 22.2 24.6C18 28.8 8 29.6 3.8 26.4C2.2 25.2 1.6 23.8 1.6 22Z" fill="#e0242a"/><ellipse cx="10.6" cy="21.8" rx="6.8" ry="5" fill="#fff"/><circle cx="8.6" cy="22.6" r="3.5" fill="#111"/><circle cx="7.4" cy="23.6" r="1.2" fill="#fff"/></svg></div>
<div class="soc" style="top:253.2px;background:linear-gradient(#f4f4f4,#dedede)"><svg width="32" height="32" viewBox="0 0 32 32"><path d="M1 3L16 17.5L31 3" fill="none" stroke="#c4c4c4" stroke-width="1.6"/><path d="M1 30L11.5 14M31 30L20.5 14" fill="none" stroke="#d0d0d0" stroke-width="1.4"/></svg></div>
<div class="soc" style="top:285.4px;border-radius:5px;background:linear-gradient(#f88a62,#f2613c 55%,#ea5230)"><div class="abs" style="left:6.2px;top:13.2px;width:19.4px;height:5.6px;background:#fff"></div><div class="abs" style="left:13.1px;top:6.2px;width:5.6px;height:19.4px;background:#fff"></div></div>
<div class="soc" style="top:317.3px;border-radius:4px;background:linear-gradient(#2a9be0,#1682cf 60%,#0f74c2)"><div class="abs" style="left:7.2px;top:3.6px;width:17.4px;height:17.6px;background:#f4f8fb;border-radius:3px"></div><div class="abs" style="left:7.2px;top:1.8px;width:17.4px;text-align:center;font:bold 18.5px/21px 'Liberation Sans',sans-serif;color:#1b86d0">?</div><div class="abs" style="left:0;top:22.4px;width:31.6px;text-align:center;font:bold 6.6px/8px 'Liberation Sans',sans-serif;color:#fff;letter-spacing:.2px">HELP</div></div>

<!-- status row -->
<div class="abs" style="left:15.6px;top:748.4px;font-size:12px;line-height:14.1px;color:#fff;white-space:nowrap">Manually mark beat with key<br>(A, S, D, F)</div>
<div class="abs" style="left:819.4px;top:747.4px;font-size:20px;line-height:20px;color:#fff;white-space:nowrap">0:16:45.226</div>
<div class="abs" style="left:819.4px;top:767.2px;font-size:20px;line-height:20px;color:#444;white-space:nowrap">0:09:51.047</div>
<div class="abs" style="left:1245.6px;top:756.8px;width:130.6px;height:21.2px;border-radius:10.6px;background:radial-gradient(ellipse 68px 17px at 57.5% 56%,#d6d6d6 0%,#b4b4b4 22%,#7e7e7e 52%,#454545 82%,#2c2c2c 100%),#2c2c2c;box-shadow:0 0 0 0.5px #b8b8b8"></div>
<svg class="abs" style="left:1223.4px;top:756px" width="23" height="23" viewBox="0 0 23 23"><circle cx="11.5" cy="11.3" r="10.2" fill="#666" stroke="#d8d8d8" stroke-width="1"/><path d="M2.6 10.5C3.6 3 5 3 6 11.3S8.6 19.6 9.6 11.3S12.2 3 13.2 11.3S15.8 19.6 16.8 11.3S18.6 5.4 20.2 9.4" fill="none" stroke="#f6f6f6" stroke-width="1.5"/></svg>
<svg class="abs" style="left:1376.5px;top:756px" width="23" height="23" viewBox="0 0 23 23"><circle cx="11.6" cy="11.3" r="10.2" fill="#6a6a6a" stroke="#d8d8d8" stroke-width="1"/><path d="M3.6 11.3L3.9 5.4L5.4 5.8L6 7.6L6.8 6.8L7.4 8.6L8.2 7.8L8.8 9.4L9.8 8.8L10.4 9.8L11.4 9.4L12.2 10.2L13.4 9.8L14.2 10.5L16 10.3L17 10.8L20.8 10.9L20.8 11.9L17 12L16 12.5L14.2 12.3L13.4 13L12.2 12.6L11.4 13.4L10.4 13L9.8 14L8.8 13.4L8.2 15L7.4 14.2L6.8 16L6 15.2L5.4 17L3.9 17.4Z" fill="#fbfbfb"/></svg>
<div class="btn" style="left:1760.4px;top:759.4px;width:71.3px">截图</div>

<!-- bottom panel -->
<div class="panel" style="left:13.3px;top:787.2px;width:1826.6px;height:118.8px"></div>
<div class="btn" style="left:26.5px;top:795px;width:59px"><svg width="59" height="21" viewBox="0 0 59 21" style="position:absolute;left:0;top:0"><g fill="#e2e2e2" fill-opacity=".7" stroke="#4a4a4a" stroke-width="1" stroke-linejoin="round"><path d="M21.9 13.6L27.8 5.9L35.9 3.7L29.4 13.2Z"/><path d="M29.4 13.2L35.9 3.7L36.3 7.1L29 17Z" fill="#9a9a9a"/><path d="M21.9 13.6L29.4 13.2L29 17L21.8 17.2Z"/></g></svg></div>
<div class="btn" style="left:98.6px;top:795px;width:59px"><svg width="59" height="21" viewBox="0 0 59 21" style="position:absolute;left:0;top:0"><ellipse cx="29.6" cy="8" rx="7" ry="4.5" transform="rotate(-32 29.6 8)" fill="#d8d8d8" fill-opacity=".35" stroke="#4c4c4c" stroke-width="1.1"/><path d="M30 10.2L23.4 18.2" stroke="#444" stroke-width="3.4" stroke-linecap="round"/><path d="M30 10.2L23.4 18.2" stroke="#e4e4e4" stroke-width="1.6" stroke-linecap="round"/></svg></div>
<div class="btn" style="left:171.4px;top:795px;width:79px">删除</div>
<div class="btn" style="left:263.5px;top:795px;width:79px">吸附</div>
<div class="btn" style="left:356.2px;top:795px;width:79.4px">保存</div>
<div class="btn" style="left:449.6px;top:795px;width:78.6px">载入</div>
<div class="lbl" style="left:44.4px;top:820px">擦除</div>
<div class="lbl" style="left:116.2px;top:820px">移动</div>

<div class="sp" style="left:547.2px;top:795.3px"><div class="in" style="width:30.6px">6</div><div class="ar" style="left:30.6px"></div></div>
<div class="sp" style="left:631.2px;top:795.3px"><div class="in" style="width:30.6px">0</div><div class="ar" style="left:30.6px"></div></div>
<div class="sp" style="left:714px;top:795.3px"><div class="in" style="width:30.6px">165</div><div class="ar" style="left:30.6px"></div></div>
<div class="lbl" style="left:550.2px;top:820px">每小节拍数</div>
<div class="lbl" style="left:633.8px;top:820px">弱起拍数</div>
<div class="lbl" style="left:716.8px;top:820px">小节平移</div>

<div class="btn" style="left:26.5px;top:841px;width:105px">速度-力度</div>
<div class="sp" style="left:156.8px;top:840.5px"><div class="in" style="width:30.6px">1</div><div class="ar" style="left:30.6px"></div></div>
<div class="sp" style="left:231px;top:840.5px"><div class="in" style="width:30.6px">43</div><div class="ar" style="left:30.6px"></div></div>
<div class="sp" style="left:304.1px;top:840.5px"><div class="in" style="width:30.6px">40</div><div class="ar" style="left:30.6px"></div></div>
<div class="sp" style="left:377px;top:840.5px"><div class="in" style="width:30.6px">350</div><div class="ar" style="left:30.6px"></div></div>
<div class="sp" style="left:450.4px;top:840.5px"><div class="in" style="width:30.6px">3</div><div class="ar" style="left:30.6px"></div></div>
<div class="sp" style="left:529.2px;top:840.5px"><div class="in" style="width:30.6px">5</div><div class="ar" style="left:30.6px"></div></div>
<div class="sp" style="left:603.1px;top:840.5px"><div class="in" style="width:30.6px">2</div><div class="ar" style="left:30.6px"></div></div>
<div class="sp" style="left:674.2px;top:840.5px"><div class="in" style="width:37.4px;padding-left:1.6px">2.4466</div><div class="ar" style="left:37.4px"></div></div>
<div class="lbl" style="left:157.6px;top:865px">开始小节</div>
<div class="lbl" style="left:232.2px;top:865px">结束小节</div>
<div class="lbl" style="left:301.8px;top:865px">速度下限</div>
<div class="lbl" style="left:375.8px;top:865px">速度上限</div>
<div class="lbl" style="left:452.4px;top:865px">线条粗细</div>
<div class="lbl" style="left:531.4px;top:865px">力度透明</div>
<div class="lbl" style="left:605.4px;top:865px">力度放大</div>
<div class="lbl" style="left:675.6px;top:865px">窗口参数</div>
<div class="abs" style="left:740.6px;top:839.2px;font-size:10px;line-height:12.2px;color:#dcdcdc;white-space:nowrap">Default:<br>2.409(1 bar)</div>

<div class="cb" style="left:26.5px;top:883.8px"></div><div class="lbl" style="left:47.6px;top:884.8px">无嘀嗒</div>
<div class="cb" style="left:91.5px;top:883.8px"></div><div class="lbl" style="left:112.2px;top:884.8px">跟随音乐</div>
<div class="cb" style="left:185.2px;top:883.8px"><svg width="12" height="13" viewBox="0 0 12 13"><path d="M2 6.2L5 10.6L10.4 1.8" fill="none" stroke="#000" stroke-width="2.3"/></svg></div><div class="lbl" style="left:206.4px;top:884.8px">平滑</div>
<div class="cb" style="left:275.8px;top:883.8px"><svg width="12" height="13" viewBox="0 0 12 13"><path d="M2 6.2L5 10.6L10.4 1.8" fill="none" stroke="#000" stroke-width="2.3"/></svg></div><div class="lbl" style="left:296.2px;top:884.8px">拍点</div>
<div class="cb" style="left:327.6px;top:883.8px"><svg width="12" height="13" viewBox="0 0 12 13"><path d="M2 6.2L5 10.6L10.4 1.8" fill="none" stroke="#000" stroke-width="2.3"/></svg></div><div class="lbl" style="left:348px;top:884.8px">平均速度</div>
<div class="cb" style="left:433.3px;top:883.8px"><svg width="12" height="13" viewBox="0 0 12 13"><path d="M2 6.2L5 10.6L10.4 1.8" fill="none" stroke="#000" stroke-width="2.3"/></svg></div><div class="lbl" style="left:454.8px;top:884.8px">力度</div>
<div class="abs" style="left:516.6px;top:884.3px;width:13px;height:13px;border-radius:50%;background:radial-gradient(circle at 45% 35%,#d8d8d8,#a8a8a8 60%,#868686);box-shadow:0 0 0 .5px rgba(60,60,60,.5)"></div><div class="abs" style="left:520.9px;top:888.6px;width:4.4px;height:4.4px;border-radius:50%;background:#111"></div>
<div class="abs" style="left:537.6px;top:883.6px;font-size:10.9px;line-height:14px;color:#222">Curve</div>
<div class="abs" style="left:586.2px;top:884.3px;width:13px;height:13px;border-radius:50%;background:radial-gradient(circle at 45% 35%,#d8d8d8,#a8a8a8 60%,#868686);box-shadow:0 0 0 .5px rgba(60,60,60,.5)"></div>
<div class="abs" style="left:607.2px;top:883.6px;font-size:10.9px;line-height:14px;color:#222">Worm</div>

<div class="btn" style="left:1731px;top:795.1px;width:101.8px;height:23.8px;line-height:23.8px;font-weight:bold;color:#0c0c0c;font-size:11px;background:linear-gradient(#d6d6d6,#b6b6b6 50%,#909090);box-shadow:0 0 0 1.1px #3a5cf0">分享截图</div>
<div class="btn" style="left:1759px;top:834.9px;width:73.8px;height:23.8px;line-height:23.8px;font-weight:bold;color:#8f8f8f;font-size:11px;text-shadow:none;background:linear-gradient(#858585,#7a7a7a 50%,#6c6c6c);box-shadow:0 0 0 1.1px #3a44ee">IOI</div>
</div></body></html>
